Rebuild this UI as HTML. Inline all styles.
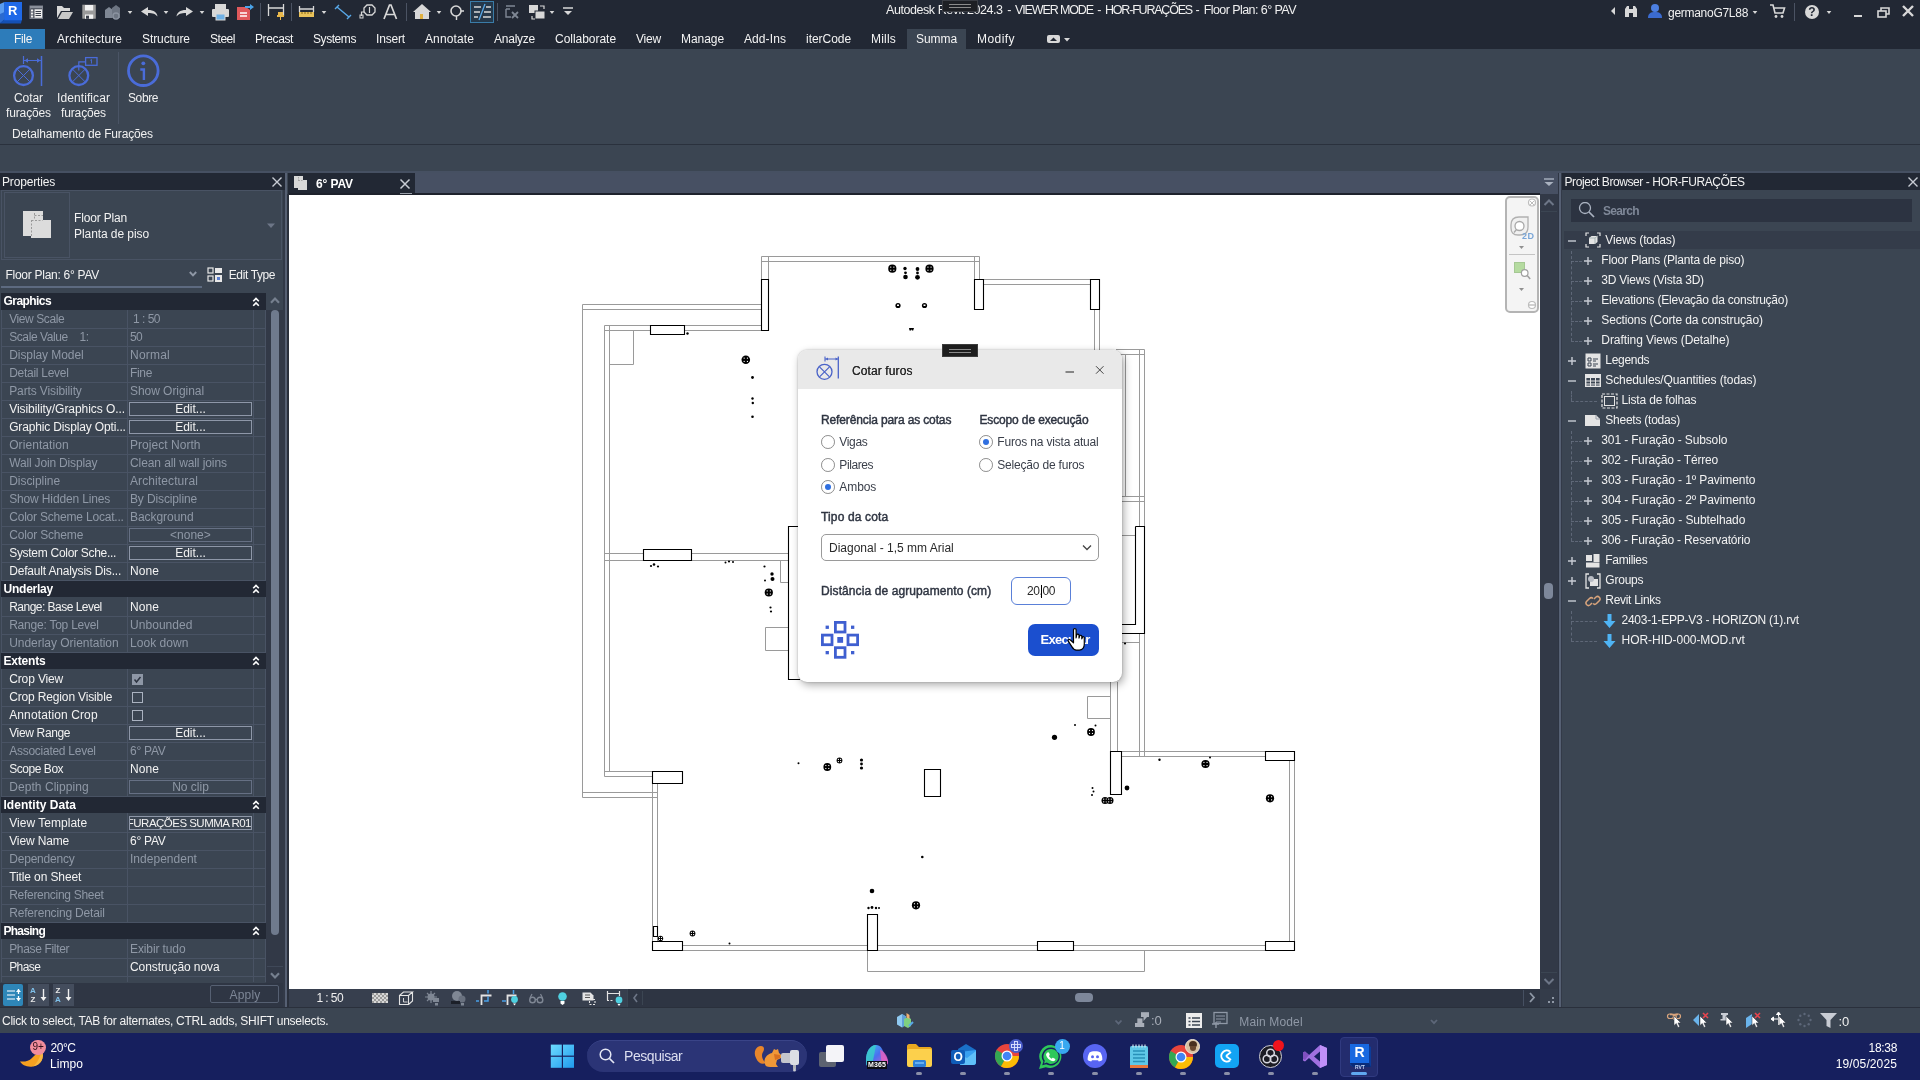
<!DOCTYPE html>
<html lang="pt-BR"><head><meta charset="utf-8"><title>Autodesk Revit - Cotar furos</title><style>
html,body{margin:0;padding:0;}
body{width:1920px;height:1080px;position:relative;overflow:hidden;background:#3b4552;font-family:"Liberation Sans",sans-serif;}
body div,body span,body svg{position:absolute;}
#root{left:0;top:0;width:1920px;height:1080px;will-change:transform;}
span{display:block;}
</style></head><body><div id="root">
<div style="left:0px;top:0px;width:1920px;height:49px;background:#222834;"></div>
<svg style="left:0px;top:0px;" width="24" height="24" viewBox="0 0 24 24"><path d="M0 4l4.500-2v17l-4.500 4z" fill="#5a9cf0"/><path d="M0 14l4.500-2v7l-4.500 4z" fill="#2a6ad0"/><path d="M0 23l4.500-4h17.500l-1 4.500h-21z" fill="#1450b4"/><rect x="4.200" y="2" width="17.800" height="18.300" fill="#1f69e8"/></svg>
<span style="left:8.1px;top:4.3px;height:14px;line-height:14px;font-size:13px;color:#fff;white-space:pre;font-weight:bold;">R</span>
<svg style="left:0px;top:0px;" width="600" height="24" viewBox="0 0 600 24"><rect x="30" y="6" width="12.500" height="12.500" fill="#4a4f5a" stroke="#7a7f8a" stroke-width="1"/><rect x="30" y="6" width="12.500" height="2.200" fill="#8a8f9a"/><rect x="34.500" y="9.300" width="7.500" height="8.500" fill="#f0f0f0"/><path d="M35.500 11.500h5.500M35.500 13.500h5.500M35.500 15.500h5.500" stroke="#3a3f4a" stroke-width="1"/><rect x="31" y="9.500" width="2.200" height="2" fill="#f0f0f0"/><rect x="31" y="12.500" width="2.200" height="2" fill="#f0f0f0"/><rect x="31" y="15.500" width="2.200" height="2" fill="#f0f0f0"/><path d="M57 6h5l2 2h6v3h-9l-4 7z" fill="#d8d8d8"/><path d="M62 12h11l-4 7h-11z" fill="#c8c8c8"/><rect x="82.300" y="4.700" width="13.500" height="14" fill="#9a9a9a"/><rect x="85" y="5" width="8.200" height="5.500" fill="#f2f2f2"/><rect x="85" y="14.500" width="8.200" height="4.300" fill="#f2f2f2"/><rect x="86" y="15.700" width="3" height="3.100" fill="#3a3f4a"/><path d="M105 10l4-3 4 3v8h-8z" fill="#7f8794"/><path d="M112 8l4-3 4 3v10h-8z" fill="#6d7582"/><circle cx="116" cy="16" r="3" fill="none" stroke="#8b93a0" stroke-width="1.3"/><path d="M127.7 11h4.600l-2.300 3z" fill="#d8d8d8"/><path d="M141 11.500l7-4.500v3c6 0 9 2.500 9.500 6.500c-2-2.500-4.500-3.500-9.500-3.500v3z" fill="#d8d8d8"/><path d="M163.7 11h4.600l-2.300 3z" fill="#d8d8d8"/><path d="M193 11.500l-7-4.500v3c-6 0-9 2.500-9.500 6.500c2-2.500 4.500-3.500 9.500-3.500v3z" fill="#d8d8d8"/><path d="M199.7 11h4.600l-2.300 3z" fill="#d8d8d8"/><rect x="215" y="4" width="11" height="5" fill="#d8d8d8"/><rect x="212" y="9" width="17" height="8" rx="1" fill="#d8d8d8"/><rect x="216" y="14" width="9" height="6" fill="#6fb1e6" stroke="#d8d8d8" stroke-width="1"/><path d="M237 7h9l4 3v10h-13z" fill="#e0595c"/><path d="M240 13h7M240 16h7" stroke="#fff" stroke-width="1.5"/><path d="M245 6h5v-2l4 3-4 3v-2h-5z" fill="#4aa3e8"/><path d="M260.500 3v18M291.500 3v18M406.500 3v18M497.500 3v18" stroke="#4b5363" stroke-width="1"/><path d="M268.500 4v12M283.500 4v12M269 8h14" stroke="#d8d8d8" stroke-width="1.3" fill="none"/><path d="M278 12h5v3h1v2h-7v-2h1z" fill="#e8b84c"/><path d="M280.500 17v3" stroke="#e8b84c" stroke-width="1"/><path d="M299.500 6v6M313.500 6v6M300 9h13" stroke="#d8d8d8" stroke-width="1.3"/><rect x="299" y="12" width="15" height="5" fill="#e9c25a"/><path d="M302 12v2M305 12v2M308 12v2M311 12v2" stroke="#8a6a14" stroke-width="1"/><path d="M321.7 11h4.600l-2.300 3z" fill="#d8d8d8"/><path d="M337 7l12 10M335 9l4-4M347 19l4-4" stroke="#58a8e8" stroke-width="1.4"/><path d="M364 8l3-3h5l3 3v4l-3 3h-5l-3-3z" fill="none" stroke="#d8d8d8" stroke-width="1.3"/><path d="M369.500 7v6" stroke="#d8d8d8" stroke-width="1.2"/><path d="M361.500 16v-4h3" fill="none" stroke="#d8d8d8" stroke-width="1.2"/><rect x="360" y="15" width="3" height="3" fill="none" stroke="#d8d8d8" stroke-width="1"/><path d="M384 19l5.500-14h1.500l5.500 14M386 14.500h8.500" fill="none" stroke="#d8d8d8" stroke-width="1.700"/><path d="M413 12l9-8 9 8h-2v7h-14v-7z" fill="#d8d8d8"/><rect x="420" y="14" width="3" height="5" fill="#e0b040"/><path d="M436.7 11h4.600l-2.300 3z" fill="#d8d8d8"/><circle cx="456" cy="11" r="5" fill="none" stroke="#d8d8d8" stroke-width="1.6"/><path d="M461 11l3 0M456.500 16v4" stroke="#d8d8d8" stroke-width="1.4"/><rect x="470.500" y="1.500" width="23" height="21" fill="#25384a" stroke="#3a7ca8" stroke-width="1"/><path d="M474 7h7M486 7h5M474 12h6M484 12h7M474 17h4M483 17h8" stroke="#d8d8d8" stroke-width="1.6"/><path d="M485 4l-6 16" stroke="#58a8e8" stroke-width="1.3"/><path d="M506 6h9M506 9h4M506 9v8h5" stroke="#7f8794" stroke-width="1.4" fill="none"/><path d="M512 12l6 6M518 12l-6 6" stroke="#7f8794" stroke-width="1.8"/><rect x="529" y="5" width="9" height="8" fill="#d8d8d8"/><rect x="535" y="11" width="10" height="8" fill="#d8d8d8" stroke="#222834" stroke-width="1"/><path d="M540 6h4v3M532 16v3h3" stroke="#d8d8d8" stroke-width="1.2" fill="none"/><path d="M549.7 11h4.600l-2.300 3z" fill="#d8d8d8"/><path d="M563 8h10" stroke="#d8d8d8" stroke-width="1.5"/><path d="M564 11h8l-4 4z" fill="#d8d8d8"/></svg>
<span style="left:886.0px;top:2.0px;height:16px;line-height:16px;font-size:12.5px;color:#f0f0f0;white-space:pre;letter-spacing:-0.44px;">Autodesk Revit 2024.3</span>
<span style="left:1007.3px;top:2.0px;height:16px;line-height:16px;font-size:12.5px;color:#f0f0f0;white-space:pre;">-</span>
<span style="left:1015.0px;top:2.0px;height:16px;line-height:16px;font-size:12.5px;color:#f0f0f0;white-space:pre;letter-spacing:-1.12px;">VIEWER MODE</span>
<span style="left:1097.3px;top:2.0px;height:16px;line-height:16px;font-size:12.5px;color:#f0f0f0;white-space:pre;">-</span>
<span style="left:1105.0px;top:2.0px;height:16px;line-height:16px;font-size:12.5px;color:#f0f0f0;white-space:pre;letter-spacing:-1.20px;">HOR-FURAÇÕES</span>
<span style="left:1195.5px;top:2.0px;height:16px;line-height:16px;font-size:12.5px;color:#f0f0f0;white-space:pre;">-</span>
<span style="left:1203.7px;top:2.0px;height:16px;line-height:16px;font-size:12.5px;color:#f0f0f0;white-space:pre;letter-spacing:-0.57px;">Floor Plan: 6° PAV</span>
<div style="left:942px;top:0px;width:36px;height:12px;background:#1d1f24;border:1px solid #3a3d44;box-sizing:border-box;"></div>
<div style="left:949px;top:4px;width:22px;height:1px;background:#8a8a8a;"></div>
<div style="left:949px;top:7px;width:22px;height:1px;background:#8a8a8a;"></div>
<svg style="left:1600px;top:0px;" width="320" height="24" viewBox="0 0 320 24"><path d="M15 7v8l-4-4z" fill="#d8d8d8"/><path d="M25 9l2-3h2v11h-4zM33 6h2l2 3v8h-4z" fill="#d8d8d8"/><rect x="29" y="9" width="4" height="4" fill="#d8d8d8"/><circle cx="55" cy="8" r="4" fill="#4c7fe0"/><path d="M48 18c0-5 3-6 7-6s7 1 7 6z" fill="#3b6bd0"/><path d="M152.7 11h4.600l-2.300 3z" fill="#d8d8d8"/><path d="M170 5h3l2 8h8l1.500-5h-10" fill="none" stroke="#d8d8d8" stroke-width="1.6"/><circle cx="176" cy="16.500" r="1.400" fill="#d8d8d8"/><circle cx="182" cy="16.500" r="1.400" fill="#d8d8d8"/><path d="M194.500 3v18" stroke="#4b5363" stroke-width="1"/><circle cx="212" cy="12" r="7" fill="#d8d8d8"/><path d="M226.7 11h4.600l-2.300 3z" fill="#d8d8d8"/><path d="M254 16h8" stroke="#d8d8d8" stroke-width="2"/><rect x="278" y="11" width="8" height="6" fill="none" stroke="#d8d8d8" stroke-width="1.6"/><path d="M281 11v-3h8v6h-3" fill="none" stroke="#d8d8d8" stroke-width="1.6"/><path d="M303 6l10 10M313 6l-10 10" stroke="#d8d8d8" stroke-width="2.4"/></svg>
<span style="left:1808.3px;top:5.0px;height:14px;line-height:14px;font-size:12px;color:#222834;white-space:pre;font-weight:bold;">?</span>
<span style="left:1668.0px;top:5.0px;height:16px;line-height:16px;font-size:12px;color:#f0f0f0;white-space:pre;letter-spacing:-0.28px;">germanoG7L88</span>
<div style="left:0px;top:29px;width:45px;height:20px;background:#2d7cba;"></div>
<div style="left:907px;top:29px;width:59px;height:20px;background:#3b4552;"></div>
<span style="left:14.0px;top:31.0px;height:16px;line-height:16px;font-size:12px;color:#f4f4f4;white-space:pre;letter-spacing:-0.33px;">File</span>
<span style="left:57.0px;top:31.0px;height:16px;line-height:16px;font-size:12px;color:#f4f4f4;white-space:pre;letter-spacing:0.08px;">Architecture</span>
<span style="left:142.0px;top:31.0px;height:16px;line-height:16px;font-size:12px;color:#f4f4f4;white-space:pre;letter-spacing:-0.08px;">Structure</span>
<span style="left:210.0px;top:31.0px;height:16px;line-height:16px;font-size:12px;color:#f4f4f4;white-space:pre;letter-spacing:-0.47px;">Steel</span>
<span style="left:255.0px;top:31.0px;height:16px;line-height:16px;font-size:12px;color:#f4f4f4;white-space:pre;letter-spacing:-0.38px;">Precast</span>
<span style="left:313.0px;top:31.0px;height:16px;line-height:16px;font-size:12px;color:#f4f4f4;white-space:pre;letter-spacing:-0.43px;">Systems</span>
<span style="left:376.0px;top:31.0px;height:16px;line-height:16px;font-size:12px;color:#f4f4f4;white-space:pre;letter-spacing:-0.17px;">Insert</span>
<span style="left:425.0px;top:31.0px;height:16px;line-height:16px;font-size:12px;color:#f4f4f4;white-space:pre;letter-spacing:0.12px;">Annotate</span>
<span style="left:494.0px;top:31.0px;height:16px;line-height:16px;font-size:12px;color:#f4f4f4;white-space:pre;letter-spacing:-0.24px;">Analyze</span>
<span style="left:555.0px;top:31.0px;height:16px;line-height:16px;font-size:12px;color:#f4f4f4;white-space:pre;letter-spacing:-0.03px;">Collaborate</span>
<span style="left:636.0px;top:31.0px;height:16px;line-height:16px;font-size:12px;color:#f4f4f4;white-space:pre;letter-spacing:-0.20px;">View</span>
<span style="left:681.0px;top:31.0px;height:16px;line-height:16px;font-size:12px;color:#f4f4f4;white-space:pre;letter-spacing:-0.06px;">Manage</span>
<span style="left:744.0px;top:31.0px;height:16px;line-height:16px;font-size:12px;color:#f4f4f4;white-space:pre;letter-spacing:0.09px;">Add-Ins</span>
<span style="left:806.0px;top:31.0px;height:16px;line-height:16px;font-size:12px;color:#f4f4f4;white-space:pre;letter-spacing:-0.04px;">iterCode</span>
<span style="left:871.0px;top:31.0px;height:16px;line-height:16px;font-size:12px;color:#f4f4f4;white-space:pre;letter-spacing:0.20px;">Mills</span>
<span style="left:916.0px;top:31.0px;height:16px;line-height:16px;font-size:12px;color:#f4f4f4;white-space:pre;letter-spacing:-0.07px;">Summa</span>
<span style="left:977.0px;top:31.0px;height:16px;line-height:16px;font-size:12px;color:#f4f4f4;white-space:pre;letter-spacing:0.44px;">Modify</span>
<svg style="left:1044px;top:32px;" width="30" height="14" viewBox="0 0 30 14"><rect x="3" y="3" width="13" height="8" rx="2" fill="#d8d8d8"/><path d="M6 9l3.500-3.500 3.500 3.500z" fill="#222834"/><path d="M20 6h6l-3 3.500z" fill="#d8d8d8"/></svg>
<div style="left:0px;top:49px;width:1920px;height:123px;background:#3b4552;"></div>
<div style="left:0px;top:144px;width:1920px;height:1px;background:#2a313d;"></div>
<div style="left:118px;top:52px;width:1px;height:72px;background:#4a5465;"></div>
<svg style="left:0px;top:49px;" width="200" height="100" viewBox="0 49 200 100"><circle cx="23.500" cy="75.600" r="9.400" fill="none" stroke="#4a6cd9" stroke-width="2.300"/><path d="M17 69l13 13M30 69l-13 13" stroke="#4a6cd9" stroke-width="1"/><path d="M41.500 56v30" stroke="#4a6cd9" stroke-width="1.500"/><path d="M23.500 56v8M24 60.500h17" stroke="#4a6cd9" stroke-width="1.200"/><path d="M24.500 60.500l3.500-2.200v4.400zM40.500 60.500l-3.500-2.200v4.400z" fill="#4a6cd9"/><circle cx="78.800" cy="75.600" r="9.400" fill="none" stroke="#4a6cd9" stroke-width="2.300"/><path d="M72.300 69l13 13M85.300 69l-13 13" stroke="#4a6cd9" stroke-width="1"/><rect x="85.600" y="57.600" width="11.400" height="7.700" fill="none" stroke="#4a6cd9" stroke-width="1.300"/><path d="M78.800 70.500v-8.700h6.500" stroke="#4a6cd9" stroke-width="1.200" fill="none"/><path d="M90.300 60.300l1.200-.8v4" stroke="#4a6cd9" stroke-width=".9" fill="none"/><circle cx="143.300" cy="70.700" r="14.800" fill="none" stroke="#4a6cd9" stroke-width="2.800"/><circle cx="143.300" cy="63.300" r="1.900" fill="#4a6cd9"/><path d="M140.300 69.500h3.600v10.500" stroke="#4a6cd9" stroke-width="2.400" fill="none"/></svg>
<span style="left:14.0px;top:90.0px;height:16px;line-height:16px;font-size:12px;color:#f0f0f0;white-space:pre;letter-spacing:-0.07px;">Cotar</span>
<span style="left:6.0px;top:105.0px;height:16px;line-height:16px;font-size:12px;color:#f0f0f0;white-space:pre;letter-spacing:-0.13px;">furações</span>
<span style="left:57.0px;top:90.0px;height:16px;line-height:16px;font-size:12px;color:#f0f0f0;white-space:pre;letter-spacing:0.09px;">Identificar</span>
<span style="left:61.0px;top:105.0px;height:16px;line-height:16px;font-size:12px;color:#f0f0f0;white-space:pre;letter-spacing:-0.13px;">furações</span>
<span style="left:128.0px;top:90.0px;height:16px;line-height:16px;font-size:12px;color:#f0f0f0;white-space:pre;letter-spacing:-0.40px;">Sobre</span>
<span style="left:12.0px;top:126.0px;height:16px;line-height:16px;font-size:12px;color:#f0f0f0;white-space:pre;letter-spacing:-0.16px;">Detalhamento de Furações</span>
<div style="left:0px;top:171px;width:1920px;height:2px;background:#465062;"></div>
<div style="left:0px;top:173px;width:285px;height:17px;background:#222834;"></div>
<span style="left:2.0px;top:173.5px;height:16px;line-height:16px;font-size:12px;color:#f2f2f2;white-space:pre;letter-spacing:-0.17px;">Properties</span>
<svg style="left:271px;top:176px;" width="12" height="12" viewBox="0 0 12 12"><path d="M1.500 1.500l9 9M10.500 1.500l-9 9" stroke="#c8ccd4" stroke-width="1.400"/></svg>
<div style="left:1px;top:190px;width:281px;height:70px;border:1px solid #495364;box-sizing:border-box;"></div>
<div style="left:4px;top:192px;width:66px;height:66px;border:1px solid #495364;box-sizing:border-box;"></div>
<svg style="left:22px;top:210px;" width="30" height="30" viewBox="0 0 30 30"><rect x="1" y="1" width="20" height="25" fill="#dcdcdc"/><rect x="9" y="10" width="20" height="18" fill="#dcdcdc"/><path d="M12.500 3v7M12.500 5.500h8.500" stroke="#9a9a9a" stroke-width="1" stroke-dasharray="2 1.500" fill="none"/><path d="M9.500 10v17M9.500 10.500h11" stroke="#9a9a9a" stroke-width="1" stroke-dasharray="2 1.500" fill="none"/></svg>
<span style="left:74.0px;top:210.0px;height:16px;line-height:16px;font-size:12px;color:#f2f2f2;white-space:pre;letter-spacing:-0.17px;">Floor Plan</span>
<span style="left:74.0px;top:226.0px;height:16px;line-height:16px;font-size:12px;color:#f2f2f2;white-space:pre;letter-spacing:-0.07px;">Planta de piso</span>
<svg style="left:266px;top:222px;" width="10" height="8" viewBox="0 0 10 8"><path d="M1 1.500h8l-4 4.500z" fill="#6d7687"/></svg>
<span style="left:5.5px;top:266.5px;height:16px;line-height:16px;font-size:12px;color:#f2f2f2;white-space:pre;letter-spacing:-0.27px;">Floor Plan: 6° PAV</span>
<svg style="left:188px;top:270px;" width="10" height="8" viewBox="0 0 10 8"><path d="M1.800 2l3.200 3.300 3.200-3.300" fill="none" stroke="#8f98a6" stroke-width="1.900"/></svg>
<div style="left:1px;top:286px;width:201px;height:2px;background:#5d6a80;"></div>
<svg style="left:207px;top:267px;" width="16" height="16" viewBox="0 0 16 16"><rect x="1" y="1" width="5" height="5" fill="none" stroke="#e8e8e8" stroke-width="1.200"/><rect x="1" y="9" width="5" height="5" fill="none" stroke="#e8e8e8" stroke-width="1.200"/><rect x="8" y="1" width="7" height="5" fill="#e8e8e8"/><rect x="8" y="8" width="7" height="7" fill="#e8e8e8"/><rect x="10" y="10" width="3" height="3" fill="#5b7fd0"/></svg>
<span style="left:228.7px;top:266.5px;height:16px;line-height:16px;font-size:12px;color:#f2f2f2;white-space:pre;letter-spacing:-0.37px;">Edit Type</span>
<div style="left:1px;top:293px;width:265px;height:684px;background:#3b4552;"></div>
<div style="left:127px;top:309.5px;width:1px;height:672.5px;background:#495364;"></div>
<div style="left:253px;top:309.5px;width:1px;height:672.5px;background:#495364;"></div>
<div style="left:1px;top:309.5px;width:1px;height:672.5px;background:#495364;"></div>
<div style="left:265px;top:309.5px;width:1px;height:672.5px;background:#495364;"></div>
<div style="left:1px;top:293px;width:265px;height:16.5px;background:#222834;"></div>
<span style="left:3.5px;top:293.0px;height:16px;line-height:16px;font-size:12px;color:#fff;white-space:pre;font-weight:bold;letter-spacing:-0.56px;">Graphics</span>
<svg style="left:251px;top:295.5px;" width="10" height="12" viewBox="0 0 10 12"><path d="M2.200 5.300l2.800-2.800 2.800 2.800M2.200 9.800l2.800-2.800 2.800 2.800" fill="none" stroke="#fff" stroke-width="1.600"/></svg>
<div style="left:1px;top:328.0px;width:265px;height:1px;background:#495364;"></div>
<span style="left:9.2px;top:310.7px;height:16px;line-height:16px;font-size:12px;color:#8f98a6;white-space:pre;letter-spacing:-0.41px;">View Scale</span>
<span style="left:133.0px;top:310.7px;height:16px;line-height:16px;font-size:12px;color:#8f98a6;white-space:pre;letter-spacing:-0.50px;">1 : 50</span>
<div style="left:1px;top:346.0px;width:265px;height:1px;background:#495364;"></div>
<span style="left:9.2px;top:328.7px;height:16px;line-height:16px;font-size:12px;color:#8f98a6;white-space:pre;letter-spacing:-0.41px;">Scale Value    1:</span>
<span style="left:130.0px;top:328.7px;height:16px;line-height:16px;font-size:12px;color:#8f98a6;white-space:pre;letter-spacing:-0.67px;">50</span>
<div style="left:1px;top:364.0px;width:265px;height:1px;background:#495364;"></div>
<span style="left:9.2px;top:346.7px;height:16px;line-height:16px;font-size:12px;color:#8f98a6;white-space:pre;letter-spacing:-0.07px;">Display Model</span>
<span style="left:130.0px;top:346.7px;height:16px;line-height:16px;font-size:12px;color:#8f98a6;white-space:pre;letter-spacing:0.22px;">Normal</span>
<div style="left:1px;top:382.0px;width:265px;height:1px;background:#495364;"></div>
<span style="left:9.2px;top:364.7px;height:16px;line-height:16px;font-size:12px;color:#8f98a6;white-space:pre;letter-spacing:-0.27px;">Detail Level</span>
<span style="left:130.0px;top:364.7px;height:16px;line-height:16px;font-size:12px;color:#8f98a6;white-space:pre;letter-spacing:-0.34px;">Fine</span>
<div style="left:1px;top:400.0px;width:265px;height:1px;background:#495364;"></div>
<span style="left:9.2px;top:382.7px;height:16px;line-height:16px;font-size:12px;color:#8f98a6;white-space:pre;letter-spacing:-0.12px;">Parts Visibility</span>
<span style="left:130.0px;top:382.7px;height:16px;line-height:16px;font-size:12px;color:#8f98a6;white-space:pre;letter-spacing:-0.05px;">Show Original</span>
<div style="left:1px;top:418.0px;width:265px;height:1px;background:#495364;"></div>
<span style="left:9.2px;top:400.7px;height:16px;line-height:16px;font-size:12px;color:#f2f2f2;white-space:pre;letter-spacing:-0.05px;">Visibility/Graphics O...</span>
<div style="left:129px;top:401.5px;width:123px;height:14.5px;border:1px solid #8e97a8;box-sizing:border-box;"></div>
<span style="left:175.2px;top:401.2px;height:16px;line-height:16px;font-size:12px;color:#f2f2f2;white-space:pre;">Edit...</span>
<div style="left:1px;top:436.0px;width:265px;height:1px;background:#495364;"></div>
<span style="left:9.2px;top:418.7px;height:16px;line-height:16px;font-size:12px;color:#f2f2f2;white-space:pre;letter-spacing:-0.15px;">Graphic Display Opti...</span>
<div style="left:129px;top:419.5px;width:123px;height:14.5px;border:1px solid #8e97a8;box-sizing:border-box;"></div>
<span style="left:175.2px;top:419.2px;height:16px;line-height:16px;font-size:12px;color:#f2f2f2;white-space:pre;">Edit...</span>
<div style="left:1px;top:454.0px;width:265px;height:1px;background:#495364;"></div>
<span style="left:9.2px;top:436.7px;height:16px;line-height:16px;font-size:12px;color:#8f98a6;white-space:pre;letter-spacing:0.07px;">Orientation</span>
<span style="left:130.0px;top:436.7px;height:16px;line-height:16px;font-size:12px;color:#8f98a6;white-space:pre;letter-spacing:0.04px;">Project North</span>
<div style="left:1px;top:472.0px;width:265px;height:1px;background:#495364;"></div>
<span style="left:9.2px;top:454.7px;height:16px;line-height:16px;font-size:12px;color:#8f98a6;white-space:pre;letter-spacing:-0.17px;">Wall Join Display</span>
<span style="left:130.0px;top:454.7px;height:16px;line-height:16px;font-size:12px;color:#8f98a6;white-space:pre;letter-spacing:-0.09px;">Clean all wall joins</span>
<div style="left:1px;top:490.0px;width:265px;height:1px;background:#495364;"></div>
<span style="left:9.2px;top:472.7px;height:16px;line-height:16px;font-size:12px;color:#8f98a6;white-space:pre;letter-spacing:-0.04px;">Discipline</span>
<span style="left:130.0px;top:472.7px;height:16px;line-height:16px;font-size:12px;color:#8f98a6;white-space:pre;letter-spacing:0.10px;">Architectural</span>
<div style="left:1px;top:508.0px;width:265px;height:1px;background:#495364;"></div>
<span style="left:9.2px;top:490.7px;height:16px;line-height:16px;font-size:12px;color:#8f98a6;white-space:pre;letter-spacing:-0.14px;">Show Hidden Lines</span>
<span style="left:130.0px;top:490.7px;height:16px;line-height:16px;font-size:12px;color:#8f98a6;white-space:pre;letter-spacing:-0.13px;">By Discipline</span>
<div style="left:1px;top:526.0px;width:265px;height:1px;background:#495364;"></div>
<span style="left:9.2px;top:508.7px;height:16px;line-height:16px;font-size:12px;color:#8f98a6;white-space:pre;letter-spacing:-0.20px;">Color Scheme Locat...</span>
<span style="left:130.0px;top:508.7px;height:16px;line-height:16px;font-size:12px;color:#8f98a6;white-space:pre;letter-spacing:-0.05px;">Background</span>
<div style="left:1px;top:544.0px;width:265px;height:1px;background:#495364;"></div>
<span style="left:9.2px;top:526.7px;height:16px;line-height:16px;font-size:12px;color:#8f98a6;white-space:pre;letter-spacing:-0.17px;">Color Scheme</span>
<div style="left:129px;top:527.5px;width:123px;height:14.5px;border:1px solid #667084;box-sizing:border-box;"></div>
<span style="left:170.1px;top:527.2px;height:16px;line-height:16px;font-size:12px;color:#8f98a6;white-space:pre;">&lt;none&gt;</span>
<div style="left:1px;top:562.0px;width:265px;height:1px;background:#495364;"></div>
<span style="left:9.2px;top:544.7px;height:16px;line-height:16px;font-size:12px;color:#f2f2f2;white-space:pre;letter-spacing:-0.29px;">System Color Sche...</span>
<div style="left:129px;top:545.5px;width:123px;height:14.5px;border:1px solid #8e97a8;box-sizing:border-box;"></div>
<span style="left:175.2px;top:545.2px;height:16px;line-height:16px;font-size:12px;color:#f2f2f2;white-space:pre;">Edit...</span>
<div style="left:1px;top:580.0px;width:265px;height:1px;background:#495364;"></div>
<span style="left:9.2px;top:562.7px;height:16px;line-height:16px;font-size:12px;color:#f2f2f2;white-space:pre;letter-spacing:-0.18px;">Default Analysis Dis...</span>
<span style="left:130.0px;top:562.7px;height:16px;line-height:16px;font-size:12px;color:#f2f2f2;white-space:pre;letter-spacing:0.08px;">None</span>
<div style="left:1px;top:580.7px;width:265px;height:16.5px;background:#222834;"></div>
<span style="left:3.5px;top:580.7px;height:16px;line-height:16px;font-size:12px;color:#fff;white-space:pre;font-weight:bold;letter-spacing:-0.23px;">Underlay</span>
<svg style="left:251px;top:583.2px;" width="10" height="12" viewBox="0 0 10 12"><path d="M2.200 5.300l2.800-2.800 2.800 2.800M2.200 9.800l2.800-2.800 2.800 2.800" fill="none" stroke="#fff" stroke-width="1.600"/></svg>
<div style="left:1px;top:616.0px;width:265px;height:1px;background:#495364;"></div>
<span style="left:9.2px;top:598.7px;height:16px;line-height:16px;font-size:12px;color:#f2f2f2;white-space:pre;letter-spacing:-0.52px;">Range: Base Level</span>
<span style="left:130.0px;top:598.7px;height:16px;line-height:16px;font-size:12px;color:#f2f2f2;white-space:pre;letter-spacing:0.08px;">None</span>
<div style="left:1px;top:634.0px;width:265px;height:1px;background:#495364;"></div>
<span style="left:9.2px;top:616.7px;height:16px;line-height:16px;font-size:12px;color:#8f98a6;white-space:pre;letter-spacing:-0.23px;">Range: Top Level</span>
<span style="left:130.0px;top:616.7px;height:16px;line-height:16px;font-size:12px;color:#8f98a6;white-space:pre;letter-spacing:0.05px;">Unbounded</span>
<div style="left:1px;top:652.0px;width:265px;height:1px;background:#495364;"></div>
<span style="left:9.2px;top:634.7px;height:16px;line-height:16px;font-size:12px;color:#8f98a6;white-space:pre;letter-spacing:-0.03px;">Underlay Orientation</span>
<span style="left:130.0px;top:634.7px;height:16px;line-height:16px;font-size:12px;color:#8f98a6;white-space:pre;letter-spacing:0.05px;">Look down</span>
<div style="left:1px;top:652.7px;width:265px;height:16.5px;background:#222834;"></div>
<span style="left:3.5px;top:652.7px;height:16px;line-height:16px;font-size:12px;color:#fff;white-space:pre;font-weight:bold;letter-spacing:-0.19px;">Extents</span>
<svg style="left:251px;top:655.2px;" width="10" height="12" viewBox="0 0 10 12"><path d="M2.200 5.300l2.800-2.800 2.800 2.800M2.200 9.800l2.800-2.800 2.800 2.800" fill="none" stroke="#fff" stroke-width="1.600"/></svg>
<div style="left:1px;top:688.0px;width:265px;height:1px;background:#495364;"></div>
<span style="left:9.2px;top:670.7px;height:16px;line-height:16px;font-size:12px;color:#f2f2f2;white-space:pre;letter-spacing:-0.13px;">Crop View</span>
<div style="left:132px;top:674.2px;width:11px;height:11px;background:#8e97a6;"></div>
<svg style="left:132px;top:674.2px;" width="11" height="11" viewBox="0 0 11 11"><path d="M2.500 5.500l2 2.500 4-5" fill="none" stroke="#2c3340" stroke-width="1.500"/></svg>
<div style="left:1px;top:706.0px;width:265px;height:1px;background:#495364;"></div>
<span style="left:9.2px;top:688.7px;height:16px;line-height:16px;font-size:12px;color:#f2f2f2;white-space:pre;letter-spacing:-0.15px;">Crop Region Visible</span>
<div style="left:132px;top:692.2px;width:11px;height:11px;border:1px solid #aab2c0;box-sizing:border-box;"></div>
<div style="left:1px;top:724.0px;width:265px;height:1px;background:#495364;"></div>
<span style="left:9.2px;top:706.7px;height:16px;line-height:16px;font-size:12px;color:#f2f2f2;white-space:pre;letter-spacing:0.12px;">Annotation Crop</span>
<div style="left:132px;top:710.2px;width:11px;height:11px;border:1px solid #aab2c0;box-sizing:border-box;"></div>
<div style="left:1px;top:742.0px;width:265px;height:1px;background:#495364;"></div>
<span style="left:9.2px;top:724.7px;height:16px;line-height:16px;font-size:12px;color:#f2f2f2;white-space:pre;letter-spacing:-0.35px;">View Range</span>
<div style="left:129px;top:725.5px;width:123px;height:14.5px;border:1px solid #8e97a8;box-sizing:border-box;"></div>
<span style="left:175.2px;top:725.2px;height:16px;line-height:16px;font-size:12px;color:#f2f2f2;white-space:pre;">Edit...</span>
<div style="left:1px;top:760.0px;width:265px;height:1px;background:#495364;"></div>
<span style="left:9.2px;top:742.7px;height:16px;line-height:16px;font-size:12px;color:#8f98a6;white-space:pre;letter-spacing:-0.26px;">Associated Level</span>
<span style="left:130.0px;top:742.7px;height:16px;line-height:16px;font-size:12px;color:#8f98a6;white-space:pre;letter-spacing:-0.26px;">6° PAV</span>
<div style="left:1px;top:778.0px;width:265px;height:1px;background:#495364;"></div>
<span style="left:9.2px;top:760.7px;height:16px;line-height:16px;font-size:12px;color:#f2f2f2;white-space:pre;letter-spacing:-0.45px;">Scope Box</span>
<span style="left:130.0px;top:760.7px;height:16px;line-height:16px;font-size:12px;color:#f2f2f2;white-space:pre;letter-spacing:0.08px;">None</span>
<div style="left:1px;top:796.0px;width:265px;height:1px;background:#495364;"></div>
<span style="left:9.2px;top:778.7px;height:16px;line-height:16px;font-size:12px;color:#8f98a6;white-space:pre;letter-spacing:0.06px;">Depth Clipping</span>
<div style="left:129px;top:779.5px;width:123px;height:14.5px;border:1px solid #667084;box-sizing:border-box;"></div>
<span style="left:172.2px;top:779.2px;height:16px;line-height:16px;font-size:12px;color:#8f98a6;white-space:pre;">No clip</span>
<div style="left:1px;top:796.7px;width:265px;height:16.5px;background:#222834;"></div>
<span style="left:3.5px;top:796.7px;height:16px;line-height:16px;font-size:12px;color:#fff;white-space:pre;font-weight:bold;letter-spacing:0.04px;">Identity Data</span>
<svg style="left:251px;top:799.2px;" width="10" height="12" viewBox="0 0 10 12"><path d="M2.200 5.300l2.800-2.800 2.800 2.800M2.200 9.800l2.800-2.800 2.800 2.800" fill="none" stroke="#fff" stroke-width="1.600"/></svg>
<div style="left:1px;top:832.0px;width:265px;height:1px;background:#495364;"></div>
<span style="left:9.2px;top:814.7px;height:16px;line-height:16px;font-size:12px;color:#f2f2f2;white-space:pre;letter-spacing:0.03px;">View Template</span>
<div style="left:129px;top:815.5px;width:123px;height:14.5px;border:1px solid #8e97a8;box-sizing:border-box;overflow:hidden;"><span style="right:0px;top:-0.500px;height:14px;line-height:14px;font-size:11.500px;color:#f2f2f2;white-space:nowrap;letter-spacing:-0.520px;">HOR-FURAÇÕES SUMMA R01</span></div>
<div style="left:1px;top:850.0px;width:265px;height:1px;background:#495364;"></div>
<span style="left:9.2px;top:832.7px;height:16px;line-height:16px;font-size:12px;color:#f2f2f2;white-space:pre;letter-spacing:-0.13px;">View Name</span>
<span style="left:130.0px;top:832.7px;height:16px;line-height:16px;font-size:12px;color:#f2f2f2;white-space:pre;letter-spacing:-0.26px;">6° PAV</span>
<div style="left:1px;top:868.0px;width:265px;height:1px;background:#495364;"></div>
<span style="left:9.2px;top:850.7px;height:16px;line-height:16px;font-size:12px;color:#8f98a6;white-space:pre;letter-spacing:-0.19px;">Dependency</span>
<span style="left:130.0px;top:850.7px;height:16px;line-height:16px;font-size:12px;color:#8f98a6;white-space:pre;letter-spacing:0.02px;">Independent</span>
<div style="left:1px;top:886.0px;width:265px;height:1px;background:#495364;"></div>
<span style="left:9.2px;top:868.7px;height:16px;line-height:16px;font-size:12px;color:#f2f2f2;white-space:pre;letter-spacing:-0.11px;">Title on Sheet</span>
<div style="left:1px;top:904.0px;width:265px;height:1px;background:#495364;"></div>
<span style="left:9.2px;top:886.7px;height:16px;line-height:16px;font-size:12px;color:#8f98a6;white-space:pre;letter-spacing:-0.29px;">Referencing Sheet</span>
<div style="left:1px;top:922.0px;width:265px;height:1px;background:#495364;"></div>
<span style="left:9.2px;top:904.7px;height:16px;line-height:16px;font-size:12px;color:#8f98a6;white-space:pre;letter-spacing:-0.18px;">Referencing Detail</span>
<div style="left:1px;top:922.7px;width:265px;height:16.5px;background:#222834;"></div>
<span style="left:3.5px;top:922.7px;height:16px;line-height:16px;font-size:12px;color:#fff;white-space:pre;font-weight:bold;letter-spacing:-0.74px;">Phasing</span>
<svg style="left:251px;top:925.2px;" width="10" height="12" viewBox="0 0 10 12"><path d="M2.200 5.300l2.800-2.800 2.800 2.800M2.200 9.800l2.800-2.800 2.800 2.800" fill="none" stroke="#fff" stroke-width="1.600"/></svg>
<div style="left:1px;top:958.0px;width:265px;height:1px;background:#495364;"></div>
<span style="left:9.2px;top:940.7px;height:16px;line-height:16px;font-size:12px;color:#8f98a6;white-space:pre;letter-spacing:-0.34px;">Phase Filter</span>
<span style="left:130.0px;top:940.7px;height:16px;line-height:16px;font-size:12px;color:#8f98a6;white-space:pre;letter-spacing:-0.11px;">Exibir tudo</span>
<div style="left:1px;top:976.0px;width:265px;height:1px;background:#495364;"></div>
<span style="left:9.2px;top:958.7px;height:16px;line-height:16px;font-size:12px;color:#f2f2f2;white-space:pre;letter-spacing:-0.60px;">Phase</span>
<span style="left:130.0px;top:958.7px;height:16px;line-height:16px;font-size:12px;color:#f2f2f2;white-space:pre;letter-spacing:-0.08px;">Construção nova</span>
<div style="left:266px;top:293px;width:18px;height:690px;background:#323947;"></div>
<div style="left:266px;top:293px;width:17px;height:16.5px;background:#3b4552;"></div>
<svg style="left:269px;top:296px;" width="12" height="9" viewBox="0 0 12 9"><path d="M2 6.800l4-4.200 4 4.200" fill="none" stroke="#76808f" stroke-width="2.200"/></svg>
<div style="left:271px;top:310px;width:8px;height:625px;background:#6f7a8d;border-radius:4px;"></div>
<svg style="left:269px;top:971px;" width="12" height="9" viewBox="0 0 12 9"><path d="M2 2.200l4 4.200 4-4.200" fill="none" stroke="#76808f" stroke-width="2.200"/></svg>
<div style="left:267px;top:966px;width:16px;height:1px;background:#3f4858;"></div>
<div style="left:0px;top:983px;width:284px;height:25px;background:#2f3644;"></div>
<div style="left:3px;top:984px;width:20px;height:22px;background:#2e86b8;border-radius:2px;"></div>
<div style="left:28px;top:984px;width:21px;height:22px;background:#444d5d;"></div>
<div style="left:53px;top:984px;width:21px;height:22px;background:#444d5d;"></div>
<svg style="left:3px;top:984px;" width="72" height="22" viewBox="0 0 72 22"><path d="M4 7h8M4 11h8M4 15h8" stroke="#bcd8ea" stroke-width="1.300"/><path d="M15.500 5v5M15.500 12v5" stroke="#fff" stroke-width="1.300"/><path d="M13 8l2.500-3 2.500 3zM13 14l2.500 3 2.500-3z" fill="#fff"/><path d="M40.500 5v11" stroke="#f0f0f0" stroke-width="1.400"/><path d="M37.500 13l3 4 3-4z" fill="#f0f0f0"/><path d="M65.500 5v11" stroke="#f0f0f0" stroke-width="1.400"/><path d="M62.500 13l3 4 3-4z" fill="#f0f0f0"/></svg>
<span style="left:30.0px;top:985.5px;height:9px;line-height:9px;font-size:8px;color:#7fc0ea;white-space:pre;font-weight:bold;">A</span>
<span style="left:30.5px;top:994.5px;height:9px;line-height:9px;font-size:8px;color:#e8e8e8;white-space:pre;font-weight:bold;">Z</span>
<span style="left:55.5px;top:985.5px;height:9px;line-height:9px;font-size:8px;color:#e8e8e8;white-space:pre;font-weight:bold;">Z</span>
<span style="left:55.0px;top:994.5px;height:9px;line-height:9px;font-size:8px;color:#7fc0ea;white-space:pre;font-weight:bold;">A</span>
<div style="left:210px;top:985px;width:69px;height:18px;border:1px solid #566072;box-sizing:border-box;border-radius:2px;"></div>
<span style="left:229.5px;top:986.5px;height:16px;line-height:16px;font-size:12px;color:#7d8696;white-space:pre;letter-spacing:0.20px;">Apply</span>
<div style="left:1540px;top:194px;width:18px;height:795px;background:#323947;"></div>
<div style="left:1558px;top:173px;width:1px;height:834px;background:#2e3543;"></div>
<div style="left:1559px;top:173px;width:2px;height:834px;background:#566073;"></div>
<div style="left:1561px;top:173px;width:1.5px;height:834px;background:#333a48;"></div>
<svg style="left:1542px;top:198px;" width="14" height="9" viewBox="0 0 14 9"><path d="M2.500 7l4.500-4.500 4.500 4.500" fill="none" stroke="#6d7687" stroke-width="2"/></svg>
<div style="left:1541px;top:211px;width:16px;height:1px;background:#3b4552;"></div>
<svg style="left:1542px;top:976.5px;" width="14" height="9" viewBox="0 0 14 9"><path d="M2.500 2l4.500 4.500 4.500-4.500" fill="none" stroke="#6d7687" stroke-width="2"/></svg>
<div style="left:1541px;top:972px;width:16px;height:1px;background:#3b4552;"></div>
<div style="left:1543.5px;top:583px;width:9px;height:16px;background:#7d879a;border-radius:4px;"></div>
<div style="left:1562px;top:173px;width:358px;height:837px;background:#3b4552;"></div>
<div style="left:1562px;top:173px;width:358px;height:17px;background:#222834;"></div>
<span style="left:1564.5px;top:173.5px;height:16px;line-height:16px;font-size:12px;color:#f2f2f2;white-space:pre;letter-spacing:-0.42px;">Project Browser - HOR-FURAÇÕES</span>
<svg style="left:1907px;top:176px;" width="12" height="12" viewBox="0 0 12 12"><path d="M1.500 1.500l9 9M10.500 1.500l-9 9" stroke="#c8ccd4" stroke-width="1.400"/></svg>
<div style="left:1571px;top:199px;width:341px;height:22.5px;background:#2c3341;"></div>
<svg style="left:1578px;top:202px;" width="18" height="18" viewBox="0 0 18 18"><circle cx="7" cy="6" r="5.500" fill="none" stroke="#aab2c0" stroke-width="1.300"/><path d="M11 10l5 5" stroke="#aab2c0" stroke-width="1.700"/></svg>
<span style="left:1603.0px;top:202.5px;height:16px;line-height:16px;font-size:12px;color:#7f8898;white-space:pre;font-weight:bold;letter-spacing:-0.67px;">Search</span>
<div style="left:1564px;top:231px;width:356px;height:17.5px;background:#343c4a;"></div>
<div style="left:1571px;top:251px;width:1px;height:90px;border-left:1px dashed #6d7687;box-sizing:border-box;opacity:.7;"></div>
<div style="left:1571px;top:261px;width:11px;height:1px;border-top:1px dashed #6d7687;box-sizing:border-box;opacity:.7;"></div>
<div style="left:1571px;top:281px;width:11px;height:1px;border-top:1px dashed #6d7687;box-sizing:border-box;opacity:.7;"></div>
<div style="left:1571px;top:301px;width:11px;height:1px;border-top:1px dashed #6d7687;box-sizing:border-box;opacity:.7;"></div>
<div style="left:1571px;top:321px;width:11px;height:1px;border-top:1px dashed #6d7687;box-sizing:border-box;opacity:.7;"></div>
<div style="left:1571px;top:341px;width:11px;height:1px;border-top:1px dashed #6d7687;box-sizing:border-box;opacity:.7;"></div>
<div style="left:1571px;top:391px;width:1px;height:10px;border-left:1px dashed #6d7687;box-sizing:border-box;opacity:.7;"></div>
<div style="left:1571px;top:401px;width:26px;height:1px;border-top:1px dashed #6d7687;box-sizing:border-box;opacity:.7;"></div>
<div style="left:1571px;top:431px;width:1px;height:110px;border-left:1px dashed #6d7687;box-sizing:border-box;opacity:.7;"></div>
<div style="left:1571px;top:441px;width:11px;height:1px;border-top:1px dashed #6d7687;box-sizing:border-box;opacity:.7;"></div>
<div style="left:1571px;top:461px;width:11px;height:1px;border-top:1px dashed #6d7687;box-sizing:border-box;opacity:.7;"></div>
<div style="left:1571px;top:481px;width:11px;height:1px;border-top:1px dashed #6d7687;box-sizing:border-box;opacity:.7;"></div>
<div style="left:1571px;top:501px;width:11px;height:1px;border-top:1px dashed #6d7687;box-sizing:border-box;opacity:.7;"></div>
<div style="left:1571px;top:521px;width:11px;height:1px;border-top:1px dashed #6d7687;box-sizing:border-box;opacity:.7;"></div>
<div style="left:1571px;top:541px;width:11px;height:1px;border-top:1px dashed #6d7687;box-sizing:border-box;opacity:.7;"></div>
<div style="left:1571px;top:611px;width:1px;height:30px;border-left:1px dashed #6d7687;box-sizing:border-box;opacity:.7;"></div>
<div style="left:1571px;top:621px;width:26px;height:1px;border-top:1px dashed #6d7687;box-sizing:border-box;opacity:.7;"></div>
<div style="left:1571px;top:641px;width:26px;height:1px;border-top:1px dashed #6d7687;box-sizing:border-box;opacity:.7;"></div>
<svg style="left:1566.7px;top:235.8px;" width="10" height="10" viewBox="0 0 10 10"><path d="M1 5h8" stroke="#c8ccd4" stroke-width="1.400"/></svg>
<svg style="left:1585px;top:231.8px;" width="16" height="16" viewBox="0 0 16 16"><path d="M1 4v-3h3M12 1h3v3M15 12v3h-3M4 15h-3v-3" fill="none" stroke="#e4e4e4" stroke-width="1.200"/><path d="M4 6l2.500-2h6v6l-2.500 2h-6z" fill="#e4e4e4"/><path d="M4 6h6v6M10 6l2.500-2" stroke="#9aa" stroke-width=".8" fill="none"/></svg>
<span style="left:1605.3px;top:232.3px;height:16px;line-height:16px;font-size:12px;color:#f2f2f2;white-space:pre;letter-spacing:-0.18px;">Views (todas)</span>
<svg style="left:1583px;top:255.8px;" width="10" height="10" viewBox="0 0 10 10"><path d="M1 5h8M5 1v8" stroke="#c8ccd4" stroke-width="1.400"/></svg>
<span style="left:1601.3px;top:252.3px;height:16px;line-height:16px;font-size:12px;color:#f2f2f2;white-space:pre;letter-spacing:-0.18px;">Floor Plans (Planta de piso)</span>
<svg style="left:1583px;top:275.8px;" width="10" height="10" viewBox="0 0 10 10"><path d="M1 5h8M5 1v8" stroke="#c8ccd4" stroke-width="1.400"/></svg>
<span style="left:1601.3px;top:272.3px;height:16px;line-height:16px;font-size:12px;color:#f2f2f2;white-space:pre;letter-spacing:-0.23px;">3D Views (Vista 3D)</span>
<svg style="left:1583px;top:295.8px;" width="10" height="10" viewBox="0 0 10 10"><path d="M1 5h8M5 1v8" stroke="#c8ccd4" stroke-width="1.400"/></svg>
<span style="left:1601.3px;top:292.3px;height:16px;line-height:16px;font-size:12px;color:#f2f2f2;white-space:pre;letter-spacing:-0.23px;">Elevations (Elevação da construção)</span>
<svg style="left:1583px;top:315.8px;" width="10" height="10" viewBox="0 0 10 10"><path d="M1 5h8M5 1v8" stroke="#c8ccd4" stroke-width="1.400"/></svg>
<span style="left:1601.3px;top:312.3px;height:16px;line-height:16px;font-size:12px;color:#f2f2f2;white-space:pre;letter-spacing:-0.13px;">Sections (Corte da construção)</span>
<svg style="left:1583px;top:335.8px;" width="10" height="10" viewBox="0 0 10 10"><path d="M1 5h8M5 1v8" stroke="#c8ccd4" stroke-width="1.400"/></svg>
<span style="left:1601.3px;top:332.3px;height:16px;line-height:16px;font-size:12px;color:#f2f2f2;white-space:pre;letter-spacing:-0.07px;">Drafting Views (Detalhe)</span>
<svg style="left:1566.7px;top:355.8px;" width="10" height="10" viewBox="0 0 10 10"><path d="M1 5h8M5 1v8" stroke="#c8ccd4" stroke-width="1.400"/></svg>
<svg style="left:1585px;top:352.8px;" width="16" height="16" viewBox="0 0 16 16"><rect x=".5" y=".5" width="15" height="15" fill="#e4e4e4"/><rect x="1.500" y="3.500" width="13" height="11" fill="#3b4552" opacity=".0"/><path d="M3 5h3v3h-3zM3 10h3v3h-3z" fill="none" stroke="#3b4552" stroke-width="1"/><path d="M8 6h5M8 8h3M8 11h5M8 13h3" stroke="#3b4552" stroke-width="1"/></svg>
<span style="left:1605.3px;top:352.3px;height:16px;line-height:16px;font-size:12px;color:#f2f2f2;white-space:pre;letter-spacing:-0.29px;">Legends</span>
<svg style="left:1566.7px;top:375.8px;" width="10" height="10" viewBox="0 0 10 10"><path d="M1 5h8" stroke="#c8ccd4" stroke-width="1.400"/></svg>
<svg style="left:1585px;top:373.8px;" width="16" height="14" viewBox="0 0 16 14"><rect x=".7" y=".7" width="14.600" height="11.600" fill="none" stroke="#e4e4e4" stroke-width="1.400"/><rect x="1" y="1" width="14" height="3" fill="#e4e4e4"/><path d="M1 7h14M1 10h14M5.500 3v10M10.500 3v10" stroke="#e4e4e4" stroke-width="1"/></svg>
<span style="left:1605.3px;top:372.3px;height:16px;line-height:16px;font-size:12px;color:#f2f2f2;white-space:pre;letter-spacing:-0.11px;">Schedules/Quantities (todas)</span>
<svg style="left:1601px;top:392.8px;" width="17" height="16" viewBox="0 0 17 16"><rect x="1" y="1" width="15" height="14" fill="none" stroke="#e4e4e4" stroke-width="1.200" stroke-dasharray="3 1.500"/><rect x="3.500" y="3.500" width="10" height="9" fill="none" stroke="#e4e4e4" stroke-width="1"/></svg>
<span style="left:1621.5px;top:392.3px;height:16px;line-height:16px;font-size:12px;color:#f2f2f2;white-space:pre;letter-spacing:-0.17px;">Lista de folhas</span>
<svg style="left:1566.7px;top:415.8px;" width="10" height="10" viewBox="0 0 10 10"><path d="M1 5h8" stroke="#c8ccd4" stroke-width="1.400"/></svg>
<svg style="left:1585px;top:413.8px;" width="16" height="13" viewBox="0 0 16 13"><path d="M0 1h11l4 4v7h-15z" fill="#e4e4e4"/><path d="M11 1v4h4" fill="none" stroke="#9aa0aa" stroke-width="1"/></svg>
<span style="left:1605.3px;top:412.3px;height:16px;line-height:16px;font-size:12px;color:#f2f2f2;white-space:pre;letter-spacing:-0.24px;">Sheets (todas)</span>
<svg style="left:1583px;top:435.8px;" width="10" height="10" viewBox="0 0 10 10"><path d="M1 5h8M5 1v8" stroke="#c8ccd4" stroke-width="1.400"/></svg>
<span style="left:1601.3px;top:432.3px;height:16px;line-height:16px;font-size:12px;color:#f2f2f2;white-space:pre;letter-spacing:-0.12px;">301 - Furação - Subsolo</span>
<svg style="left:1583px;top:455.8px;" width="10" height="10" viewBox="0 0 10 10"><path d="M1 5h8M5 1v8" stroke="#c8ccd4" stroke-width="1.400"/></svg>
<span style="left:1601.3px;top:452.3px;height:16px;line-height:16px;font-size:12px;color:#f2f2f2;white-space:pre;letter-spacing:-0.17px;">302 - Furação - Térreo</span>
<svg style="left:1583px;top:475.8px;" width="10" height="10" viewBox="0 0 10 10"><path d="M1 5h8M5 1v8" stroke="#c8ccd4" stroke-width="1.400"/></svg>
<span style="left:1601.3px;top:472.3px;height:16px;line-height:16px;font-size:12px;color:#f2f2f2;white-space:pre;letter-spacing:-0.09px;">303 - Furação - 1º Pavimento</span>
<svg style="left:1583px;top:495.8px;" width="10" height="10" viewBox="0 0 10 10"><path d="M1 5h8M5 1v8" stroke="#c8ccd4" stroke-width="1.400"/></svg>
<span style="left:1601.3px;top:492.3px;height:16px;line-height:16px;font-size:12px;color:#f2f2f2;white-space:pre;letter-spacing:-0.09px;">304 - Furação - 2º Pavimento</span>
<svg style="left:1583px;top:515.8px;" width="10" height="10" viewBox="0 0 10 10"><path d="M1 5h8M5 1v8" stroke="#c8ccd4" stroke-width="1.400"/></svg>
<span style="left:1601.3px;top:512.3px;height:16px;line-height:16px;font-size:12px;color:#f2f2f2;white-space:pre;letter-spacing:-0.08px;">305 - Furação - Subtelhado</span>
<svg style="left:1583px;top:535.8px;" width="10" height="10" viewBox="0 0 10 10"><path d="M1 5h8M5 1v8" stroke="#c8ccd4" stroke-width="1.400"/></svg>
<span style="left:1601.3px;top:532.3px;height:16px;line-height:16px;font-size:12px;color:#f2f2f2;white-space:pre;letter-spacing:-0.16px;">306 - Furação - Reservatório</span>
<svg style="left:1566.7px;top:555.8px;" width="10" height="10" viewBox="0 0 10 10"><path d="M1 5h8M5 1v8" stroke="#c8ccd4" stroke-width="1.400"/></svg>
<svg style="left:1585px;top:552.8px;" width="16" height="16" viewBox="0 0 16 16"><rect x="1" y="2" width="6" height="6" fill="#e4e4e4"/><rect x="8.500" y="1" width="6" height="8" fill="#e4e4e4"/><rect x="1" y="9.500" width="13.500" height="5" fill="#e4e4e4"/></svg>
<span style="left:1605.3px;top:552.3px;height:16px;line-height:16px;font-size:12px;color:#f2f2f2;white-space:pre;letter-spacing:-0.33px;">Families</span>
<svg style="left:1566.7px;top:575.8px;" width="10" height="10" viewBox="0 0 10 10"><path d="M1 5h8M5 1v8" stroke="#c8ccd4" stroke-width="1.400"/></svg>
<svg style="left:1585px;top:572.8px;" width="16" height="16" viewBox="0 0 16 16"><path d="M4 1h-3v14h3M12 1h3v14h-3" fill="none" stroke="#e4e4e4" stroke-width="1.300"/><rect x="5" y="6" width="8" height="7" fill="#e4e4e4"/><circle cx="6" cy="6" r="3" fill="#b8bcc4"/></svg>
<span style="left:1605.3px;top:572.3px;height:16px;line-height:16px;font-size:12px;color:#f2f2f2;white-space:pre;letter-spacing:-0.22px;">Groups</span>
<svg style="left:1566.7px;top:595.8px;" width="10" height="10" viewBox="0 0 10 10"><path d="M1 5h8" stroke="#c8ccd4" stroke-width="1.400"/></svg>
<svg style="left:1585px;top:593.8px;" width="16" height="14" viewBox="0 0 16 14"><path d="M7 9l-2 2a2.500 2.500 0 0 1-3.500-3.500l3-3a2.500 2.500 0 0 1 3.500 0M9 5l2-2a2.500 2.500 0 0 1 3.500 3.500l-3 3a2.500 2.500 0 0 1-3.500 0" fill="none" stroke="#d9a47c" stroke-width="1.500"/></svg>
<span style="left:1605.3px;top:592.3px;height:16px;line-height:16px;font-size:12px;color:#f2f2f2;white-space:pre;letter-spacing:-0.30px;">Revit Links</span>
<svg style="left:1603px;top:612.8px;" width="13" height="16" viewBox="0 0 13 16"><path d="M4.500 1h4v7h4l-6 7-6-7h4z" fill="#4fb4f4"/></svg>
<span style="left:1621.5px;top:612.3px;height:16px;line-height:16px;font-size:12px;color:#f2f2f2;white-space:pre;letter-spacing:-0.24px;">2403-1-EPP-V3 - HORIZON (1).rvt</span>
<svg style="left:1603px;top:632.8px;" width="13" height="16" viewBox="0 0 13 16"><path d="M4.500 1h4v7h4l-6 7-6-7h4z" fill="#4fb4f4"/></svg>
<span style="left:1621.5px;top:632.3px;height:16px;line-height:16px;font-size:12px;color:#f2f2f2;white-space:pre;letter-spacing:-0.04px;">HOR-HID-000-MOD.rvt</span>
<div style="left:289px;top:173px;width:1269px;height:21px;background:#475063;"></div>
<div style="left:287.5px;top:173px;width:127.5px;height:21px;background:#222834;"></div>
<svg style="left:1543px;top:177px;" width="12" height="10" viewBox="0 0 12 10"><path d="M1 2h10" stroke="#aab2c0" stroke-width="1.400"/><path d="M1.500 5h9l-4.500 4z" fill="#aab2c0"/></svg>
<svg style="left:293px;top:175px;" width="16" height="16" viewBox="0 0 16 16"><rect x="1" y="1" width="9" height="12" fill="#d8d8d8"/><rect x="5" y="5" width="9" height="10" fill="#d8d8d8"/><path d="M5.500 2v4M5.500 5.500h5" stroke="#9a9a9a" stroke-width=".8" stroke-dasharray="1.500 1" fill="none"/></svg>
<span style="left:316.0px;top:175.5px;height:16px;line-height:16px;font-size:12px;color:#fff;white-space:pre;font-weight:bold;letter-spacing:-0.12px;">6° PAV</span>
<svg style="left:399px;top:178px;" width="12" height="12" viewBox="0 0 12 12"><path d="M1.500 1.500l9 9M10.500 1.500l-9 9" stroke="#c8ccd4" stroke-width="1.500"/></svg>
<div style="left:289px;top:194px;width:1251px;height:795px;background:#ffffff;"></div>
<div style="left:289px;top:193px;width:1251px;height:2px;background:#1e222c;"></div>
<div style="left:400px;top:193px;width:12px;height:1px;background:#9aa0aa;"></div>
<svg style="left:560px;top:240px;shape-rendering:auto;" width="760" height="750" viewBox="560 240 760 750"><path d="M582.5 304.5V797.5M582.5 304.5H761.5M582.5 309.5H761.5M582.5 792.5H657.5M582.5 797.5H657.5M604.5 325.5V776.5M609.5 325.5V771.5M604.5 325.5H761.5M604.5 330.5H761.5M604.5 771.5H652.5M604.5 776.5H652.5M633.5 330.5V364.5M609.5 364.5H633.5M761.5 256.5H979.5M761.5 261.5H979.5M761.5 256.5V279.5M768.5 256.5V279.5M974.5 256.5V279.5M979.5 256.5V279.5M983.5 279.5H1090.5M983.5 284.5H1090.5M1094.5 309.5V350M1099.5 309.5V350M1116 349.5H1144.5M1116 354.5H1144.5M1144.5 349.5V526.5M1139.5 349.5V526.5M1125.5 354.5V496.5M1122 496.5H1144.5M1122 501.5H1144.5M1122 535.5H1135.5M1139.5 633.5V756.5M1144.5 633.5V756.5M1122 642.5H1139.5M604.5 553.5H788.5M604.5 560.5H788.5M780.5 560.5V582.5M780.5 582.5H788.5M788.5 627.5H765.5V650.5H788.5M1110.5 696.5H1087.5V718.5H1110.5M1110.5 682V751.5M1117.5 682V751.5M1121.5 751.5H1265.5M1121.5 756.5H1265.5M1289.5 760.5V941.5M1294.5 760.5V941.5M652.5 783.5V941.5M657.5 783.5V941.5M682.5 945.5H1265.5M682.5 950.5H1265.5M867.5 950.5V971.5H1144.5V950.5" fill="none" stroke="#9a9a9a" stroke-width="1"/><path d="M761.5 279.5H768.5V330.5H761.5ZM650.5 325.5H684.5V334.5H650.5ZM974.5 279.5H983.5V309.5H974.5ZM1090.5 279.5H1099.5V309.5H1090.5ZM643.5 549.5H691.5V560.5H643.5ZM652.5 771.5H682.5V783.5H652.5ZM652.5 941.5H682.5V950.5H652.5ZM867.5 914.5H877.5V950.5H867.5ZM924.5 769.5H940.5V796.5H924.5ZM1037.5 941.5H1073.5V950.5H1037.5ZM1110.5 751.5H1121.5V794.5H1110.5ZM1265.5 751.5H1294.5V760.5H1265.5ZM1265.5 941.5H1294.5V950.5H1265.5ZM653.5 926.5H657.5V936.5H653.5Z" fill="#fff" stroke="#000" stroke-width="1.100"/><path d="M800 526.5H788.5V679.5H800M1135.500 526.5H1144.5V633.5H1122M1135.500 526.5V624.5H1122" fill="none" stroke="#000" stroke-width="1.100"/><circle cx="892.3" cy="268.7" r="4.10" fill="#000"/><rect x="890.19" y="266.59" width="1.100" height="1.100" fill="#fff"/><rect x="893.31" y="266.59" width="1.100" height="1.100" fill="#fff"/><rect x="890.19" y="269.71" width="1.100" height="1.100" fill="#fff"/><rect x="893.31" y="269.71" width="1.100" height="1.100" fill="#fff"/><circle cx="929.5" cy="268.7" r="4.10" fill="#000"/><rect x="927.39" y="266.59" width="1.100" height="1.100" fill="#fff"/><rect x="930.51" y="266.59" width="1.100" height="1.100" fill="#fff"/><rect x="927.39" y="269.71" width="1.100" height="1.100" fill="#fff"/><rect x="930.51" y="269.71" width="1.100" height="1.100" fill="#fff"/><circle cx="905" cy="268.5" r="1.7" fill="#000"/><circle cx="905.5" cy="272.8" r="1.4" fill="#000"/><circle cx="905.5" cy="277" r="2.3" fill="#000"/><circle cx="917.5" cy="269" r="1.9" fill="#000"/><circle cx="917.5" cy="273" r="1.4" fill="#000"/><circle cx="917.5" cy="277.3" r="2.4" fill="#000"/><circle cx="898" cy="305.5" r="2.6" fill="#000"/><circle cx="924.5" cy="305.5" r="2.6" fill="#000"/><rect x="897" y="304.500" width="2" height="1.500" fill="#fff"/><rect x="923.500" y="304.500" width="2" height="1.500" fill="#fff"/><path d="M909 328h5l-.8 2.500h-1.200l-.5-1.200-.5 1.200h-1.500z" fill="#000"/><circle cx="745.8" cy="359.8" r="4.30" fill="#000"/><rect x="743.62" y="357.62" width="1.100" height="1.100" fill="#fff"/><rect x="746.88" y="357.62" width="1.100" height="1.100" fill="#fff"/><rect x="743.62" y="360.88" width="1.100" height="1.100" fill="#fff"/><rect x="746.88" y="360.88" width="1.100" height="1.100" fill="#fff"/><circle cx="752.5" cy="377.5" r="1.4" fill="#000"/><circle cx="752.5" cy="398.5" r="1.2" fill="#000"/><circle cx="752.8" cy="403" r="1.2" fill="#000"/><circle cx="752.5" cy="416.7" r="1.3" fill="#000"/><circle cx="687.5" cy="333.5" r="1.2" fill="#000"/><circle cx="651" cy="566" r="1.1" fill="#000"/><circle cx="654" cy="564.5" r="1.3" fill="#000"/><circle cx="658" cy="566.5" r="1.1" fill="#000"/><circle cx="725.5" cy="562.5" r="1" fill="#000"/><circle cx="729" cy="561.5" r="1.1" fill="#000"/><circle cx="733" cy="562" r="1" fill="#000"/><circle cx="764.5" cy="566.5" r="1.1" fill="#000"/><circle cx="765" cy="580.5" r="1" fill="#000"/><circle cx="772" cy="574" r="1.7" fill="#000"/><circle cx="772.5" cy="579" r="2" fill="#000"/><circle cx="768.8" cy="592.5" r="4.10" fill="#000"/><rect x="766.69" y="590.39" width="1.100" height="1.100" fill="#fff"/><rect x="769.81" y="590.39" width="1.100" height="1.100" fill="#fff"/><rect x="766.69" y="593.51" width="1.100" height="1.100" fill="#fff"/><rect x="769.81" y="593.51" width="1.100" height="1.100" fill="#fff"/><circle cx="770.5" cy="607.5" r="1.1" fill="#000"/><circle cx="771" cy="611.5" r="1.1" fill="#000"/><circle cx="1125" cy="643.5" r="1.1" fill="#000"/><circle cx="1054.5" cy="737.3" r="2.6" fill="#000"/><circle cx="1075" cy="725" r="1" fill="#000"/><circle cx="1091" cy="732" r="3.90" fill="#000"/><rect x="1088.97" y="729.97" width="1.100" height="1.100" fill="#fff"/><rect x="1091.93" y="729.97" width="1.100" height="1.100" fill="#fff"/><rect x="1088.97" y="732.93" width="1.100" height="1.100" fill="#fff"/><rect x="1091.93" y="732.93" width="1.100" height="1.100" fill="#fff"/><circle cx="1095.5" cy="725.5" r="1" fill="#000"/><circle cx="1159.5" cy="759.7" r="1.2" fill="#000"/><circle cx="1210" cy="757.5" r="1" fill="#000"/><circle cx="1205.5" cy="764" r="4.10" fill="#000"/><rect x="1203.39" y="761.89" width="1.100" height="1.100" fill="#fff"/><rect x="1206.51" y="761.89" width="1.100" height="1.100" fill="#fff"/><rect x="1203.39" y="765.01" width="1.100" height="1.100" fill="#fff"/><rect x="1206.51" y="765.01" width="1.100" height="1.100" fill="#fff"/><circle cx="1270" cy="798.3" r="4.10" fill="#000"/><rect x="1267.89" y="796.19" width="1.100" height="1.100" fill="#fff"/><rect x="1271.01" y="796.19" width="1.100" height="1.100" fill="#fff"/><rect x="1267.89" y="799.31" width="1.100" height="1.100" fill="#fff"/><rect x="1271.01" y="799.31" width="1.100" height="1.100" fill="#fff"/><circle cx="1127" cy="788" r="2.4" fill="#000"/><circle cx="1105" cy="800.5" r="3.50" fill="#000"/><rect x="1103.12" y="798.62" width="1.100" height="1.100" fill="#fff"/><rect x="1105.78" y="798.62" width="1.100" height="1.100" fill="#fff"/><rect x="1103.12" y="801.28" width="1.100" height="1.100" fill="#fff"/><rect x="1105.78" y="801.28" width="1.100" height="1.100" fill="#fff"/><circle cx="1110" cy="800.5" r="3.50" fill="#000"/><rect x="1108.12" y="798.62" width="1.100" height="1.100" fill="#fff"/><rect x="1110.78" y="798.62" width="1.100" height="1.100" fill="#fff"/><rect x="1108.12" y="801.28" width="1.100" height="1.100" fill="#fff"/><rect x="1110.78" y="801.28" width="1.100" height="1.100" fill="#fff"/><circle cx="1092.5" cy="788" r="1" fill="#000"/><circle cx="1093.5" cy="791.5" r="1" fill="#000"/><circle cx="1092" cy="795" r="1" fill="#000"/><circle cx="798.5" cy="763.3" r="1" fill="#000"/><circle cx="827.3" cy="767" r="3.90" fill="#000"/><rect x="825.27" y="764.97" width="1.100" height="1.100" fill="#fff"/><rect x="828.23" y="764.97" width="1.100" height="1.100" fill="#fff"/><rect x="825.27" y="767.93" width="1.100" height="1.100" fill="#fff"/><rect x="828.23" y="767.93" width="1.100" height="1.100" fill="#fff"/><circle cx="839.5" cy="760.5" r="2.90" fill="#000"/><rect x="837.85" y="758.85" width="1.100" height="1.100" fill="#fff"/><rect x="840.05" y="758.85" width="1.100" height="1.100" fill="#fff"/><rect x="837.85" y="761.05" width="1.100" height="1.100" fill="#fff"/><rect x="840.05" y="761.05" width="1.100" height="1.100" fill="#fff"/><circle cx="861.5" cy="760" r="1.6" fill="#000"/><circle cx="861.5" cy="764" r="1.4" fill="#000"/><circle cx="861.5" cy="768" r="1.6" fill="#000"/><circle cx="922.3" cy="857" r="1.3" fill="#000"/><circle cx="872" cy="891" r="2.3" fill="#000"/><circle cx="916" cy="905.3" r="4.10" fill="#000"/><rect x="913.89" y="903.19" width="1.100" height="1.100" fill="#fff"/><rect x="917.01" y="903.19" width="1.100" height="1.100" fill="#fff"/><rect x="913.89" y="906.31" width="1.100" height="1.100" fill="#fff"/><rect x="917.01" y="906.31" width="1.100" height="1.100" fill="#fff"/><circle cx="868.5" cy="908" r="1.2" fill="#000"/><circle cx="872" cy="907.5" r="1.4" fill="#000"/><circle cx="876" cy="908" r="1.2" fill="#000"/><circle cx="879" cy="908" r="1" fill="#000"/><circle cx="692.5" cy="933.5" r="2.90" fill="#000"/><rect x="690.85" y="931.85" width="1.100" height="1.100" fill="#fff"/><rect x="693.05" y="931.85" width="1.100" height="1.100" fill="#fff"/><rect x="690.85" y="934.05" width="1.100" height="1.100" fill="#fff"/><rect x="693.05" y="934.05" width="1.100" height="1.100" fill="#fff"/><circle cx="729.5" cy="943.5" r="1" fill="#000"/><circle cx="660.5" cy="938.5" r="2.70" fill="#000"/><rect x="658.92" y="936.92" width="1.100" height="1.100" fill="#fff"/><rect x="660.98" y="936.92" width="1.100" height="1.100" fill="#fff"/><rect x="658.92" y="938.98" width="1.100" height="1.100" fill="#fff"/><rect x="660.98" y="938.98" width="1.100" height="1.100" fill="#fff"/></svg>
<div style="left:1505px;top:196px;width:34px;height:117px;background:#f4f4f4;border:2px solid #b4b4b4;box-sizing:border-box;border-radius:5px;"></div>
<svg style="left:1505px;top:195px;" width="34" height="117" viewBox="0 0 34 117"><circle cx="27" cy="7.500" r="3.500" fill="#fff" stroke="#bdbdbd" stroke-width="1.200"/><path d="M25 6l4 4M29 6l-4 4" stroke="#bdbdbd" stroke-width="1"/><path d="M6 30c0-6 3-8 8-8h9v10c0 5-3 8-8 8h-2c-5 0-7-3-7-7z" fill="#f0f0f0" stroke="#b0b0b0" stroke-width="1.300"/><circle cx="14.500" cy="31" r="4.500" fill="#fff" stroke="#a8a8a8" stroke-width="1.300"/><path d="M11.500 34.500l-2.500 3" stroke="#a8a8a8" stroke-width="1.300"/><path d="M14 51h5l-2.500 3z" fill="#909090"/><path d="M4 59.500h26" stroke="#c4c4c4" stroke-width="1"/><rect x="9.500" y="67.500" width="10" height="10" fill="#b5dba0" stroke="#a5c893" stroke-width="1"/><circle cx="19.700" cy="78" r="3.300" fill="#fff" stroke="#a0a0a0" stroke-width="1.200"/><path d="M22.200 80.500l3 3.500" stroke="#a0a0a0" stroke-width="1.500"/><path d="M14 93h5l-2.500 3z" fill="#909090"/><circle cx="27" cy="110" r="3.500" fill="#fff" stroke="#bdbdbd" stroke-width="1.200"/><path d="M24 110h6" stroke="#bdbdbd" stroke-width="1.400"/></svg>
<span style="left:1522.0px;top:231.0px;height:10px;line-height:10px;font-size:9px;color:#7aa6d8;white-space:pre;font-weight:bold;letter-spacing:0.50px;">2D</span>
<div style="left:798px;top:349.5px;width:324px;height:332.5px;background:#ffffff;border-radius:9px;box-shadow:2px 3px 9px rgba(0,0,0,.33),0 0 2px rgba(0,0,0,.25);overflow:hidden;"><div style="left:0;top:0;width:324px;height:39.5px;background:#e9e9e9;"></div></div>
<div style="left:942px;top:344px;width:36px;height:12.5px;background:#1e1e1e;border:1px solid #3c3c3c;box-sizing:border-box;"></div>
<div style="left:949px;top:348.5px;width:22px;height:1px;background:#8a8a8a;"></div>
<div style="left:949px;top:351.5px;width:22px;height:1px;background:#8a8a8a;"></div>
<svg style="left:812px;top:354px;" width="32" height="28" viewBox="0 0 32 28"><circle cx="12.500" cy="17.800" r="7.500" fill="none" stroke="#4a63c8" stroke-width="1.300"/><path d="M7.500 12.800l10 10M17.500 12.800l-10 10" stroke="#4a63c8" stroke-width="1.200"/><path d="M26.300 2.500v22" stroke="#4a63c8" stroke-width="1.300"/><path d="M13 2.500v5M13 5h13" stroke="#4a63c8" stroke-width="1.100"/><path d="M13.500 5l2.500-1.500v3zM26 5l-2.500-1.500v3z" fill="#4a63c8"/></svg>
<span style="left:852.0px;top:363.0px;height:16px;line-height:16px;font-size:12px;color:#2a2a2a;white-space:pre;letter-spacing:0.11px;text-shadow:0 0 .4px #2a2a2a;">Cotar furos</span>
<svg style="left:1063px;top:364px;" width="46" height="14" viewBox="0 0 46 14"><path d="M2.500 8h8.500" stroke="#444" stroke-width="1.200"/><path d="M33 2.200l7.500 7.500M40.500 2.200l-7.500 7.500" stroke="#444" stroke-width="1"/></svg>
<span style="left:821.0px;top:411.8px;height:16px;line-height:16px;font-size:12px;color:#2f3542;white-space:pre;letter-spacing:-0.13px;-webkit-text-stroke:.45px #2f3542;">Referência para as cotas</span>
<span style="left:979.4px;top:411.8px;height:16px;line-height:16px;font-size:12px;color:#2f3542;white-space:pre;letter-spacing:-0.13px;-webkit-text-stroke:.45px #2f3542;">Escopo de execução</span>
<div style="left:821.1px;top:435.1px;width:13.8px;height:13.8px;background:#fff;border:1px solid #8c8c8c;box-sizing:border-box;border-radius:50%;"></div>
<span style="left:839.3px;top:434.0px;height:16px;line-height:16px;font-size:12px;color:#3a3f4a;white-space:pre;letter-spacing:-0.34px;">Vigas</span>
<div style="left:821.1px;top:457.8px;width:13.8px;height:13.8px;background:#fff;border:1px solid #8c8c8c;box-sizing:border-box;border-radius:50%;"></div>
<span style="left:839.3px;top:456.7px;height:16px;line-height:16px;font-size:12px;color:#3a3f4a;white-space:pre;letter-spacing:-0.40px;">Pilares</span>
<div style="left:821.1px;top:480.1px;width:13.8px;height:13.8px;background:#fff;border:1px solid #8c8c8c;box-sizing:border-box;border-radius:50%;"></div>
<div style="left:824.8px;top:483.8px;width:6.4px;height:6.4px;background:#2f6fe0;border-radius:50%;"></div>
<span style="left:839.3px;top:479.0px;height:16px;line-height:16px;font-size:12px;color:#3a3f4a;white-space:pre;letter-spacing:-0.07px;">Ambos</span>
<div style="left:979.1px;top:435.1px;width:13.8px;height:13.8px;background:#fff;border:1px solid #8c8c8c;box-sizing:border-box;border-radius:50%;"></div>
<div style="left:982.8px;top:438.8px;width:6.4px;height:6.4px;background:#2f6fe0;border-radius:50%;"></div>
<span style="left:997.3px;top:434.0px;height:16px;line-height:16px;font-size:12px;color:#3a3f4a;white-space:pre;letter-spacing:-0.17px;">Furos na vista atual</span>
<div style="left:979.1px;top:457.8px;width:13.8px;height:13.8px;background:#fff;border:1px solid #8c8c8c;box-sizing:border-box;border-radius:50%;"></div>
<span style="left:997.3px;top:456.7px;height:16px;line-height:16px;font-size:12px;color:#3a3f4a;white-space:pre;letter-spacing:-0.19px;">Seleção de furos</span>
<span style="left:821.0px;top:508.8px;height:16px;line-height:16px;font-size:12px;color:#2f3542;white-space:pre;letter-spacing:0.14px;-webkit-text-stroke:.45px #2f3542;">Tipo da cota</span>
<div style="left:821px;top:533.6px;width:277.7px;height:27px;background:#fff;border:1px solid #9a9a9a;box-sizing:border-box;border-radius:5px;"></div>
<span style="left:829.0px;top:539.6px;height:16px;line-height:16px;font-size:12px;color:#2a2a2a;white-space:pre;">Diagonal - 1,5 mm Arial</span>
<svg style="left:1081px;top:543px;" width="12" height="9" viewBox="0 0 12 9"><path d="M2 2.500l4 4 4-4" fill="none" stroke="#444" stroke-width="1.300"/></svg>
<span style="left:821.0px;top:583.0px;height:16px;line-height:16px;font-size:12px;color:#2f3542;white-space:pre;letter-spacing:0.10px;-webkit-text-stroke:.45px #2f3542;">Distância de agrupamento (cm)</span>
<div style="left:1011px;top:577.3px;width:60px;height:27.5px;background:#fff;border:1.300px solid #5a80d8;box-sizing:border-box;border-radius:6px;"></div>
<span style="left:1026.9px;top:583.0px;height:16px;line-height:16px;font-size:12px;color:#2a2a2a;white-space:pre;letter-spacing:-0.35px;">20,00</span>
<div style="left:1040.6px;top:584.5px;width:1px;height:13px;background:#000;"></div>
<svg style="left:821px;top:621px;" width="39" height="39" viewBox="0 0 39 39"><rect x="14.4" y="1.4" width="9.600" height="9.600" fill="none" stroke="#3f5fd0" stroke-width="2.800"/><rect x="1.4" y="14.1" width="9.600" height="9.600" fill="none" stroke="#3f5fd0" stroke-width="2.800"/><rect x="27.0" y="14.1" width="9.600" height="9.600" fill="none" stroke="#3f5fd0" stroke-width="2.800"/><rect x="14.4" y="26.7" width="9.600" height="9.600" fill="none" stroke="#3f5fd0" stroke-width="2.800"/><rect x="16.300" y="16" width="5.800" height="5.800" fill="#3f5fd0"/><rect x="4.6" y="4.6" width="3.300" height="3.300" fill="#3f5fd0"/><rect x="30" y="4.6" width="3.300" height="3.300" fill="#3f5fd0"/><rect x="4.6" y="30" width="3.300" height="3.300" fill="#3f5fd0"/><rect x="30" y="30" width="3.300" height="3.300" fill="#3f5fd0"/></svg>
<div style="left:1028.3px;top:623.8px;width:70.7px;height:32.2px;background:#1b4fcf;border-radius:7px;"></div>
<span style="left:1040.6px;top:631.6px;height:16px;line-height:16px;font-size:13px;color:#fff;white-space:pre;font-weight:bold;letter-spacing:-0.74px;">Executar</span>
<svg style="left:1064px;top:626px;" width="26" height="28" viewBox="0 0 26 28"><path d="M9.500 3.500c0-1.300 2.600-1.300 2.600 0v8.500l.6-3.200c.2-1 2.300-.8 2.300.3v3l.7-2.300c.3-.9 2.100-.6 2.100.4v2.600l.7-1.600c.4-.8 1.800-.5 1.800.4v6.500c0 3.500-2 6-5 6h-3c-2 0-3-1-4.500-3.500l-3.500-5.500c-.8-1.200.8-2.300 1.800-1.300l3.400 3z" fill="#fff" stroke="#000" stroke-width="1.200" stroke-linejoin="round"/></svg>
<div style="left:284px;top:989px;width:1274px;height:18px;background:#373f4e;"></div>
<div style="left:627px;top:989px;width:913px;height:18px;background:#2e3543;"></div>
<div style="left:1540px;top:989px;width:18px;height:18px;background:#343c4a;"></div>
<div style="left:283px;top:190px;width:2px;height:818px;background:#323947;"></div>
<div style="left:285px;top:173px;width:2px;height:835px;background:#566073;"></div>
<div style="left:287px;top:194px;width:2px;height:814px;background:#2a303c;"></div>
<div style="left:0px;top:1006.5px;width:1920px;height:1.5px;background:#2a303c;"></div>
<div style="left:0px;top:1008px;width:1920px;height:24.5px;background:#3b4552;"></div>
<span style="left:316.5px;top:990.3px;height:16px;line-height:16px;font-size:12px;color:#f0f0f0;white-space:pre;letter-spacing:-0.59px;">1 : 50</span>
<svg style="left:360px;top:985px;" width="300" height="24" viewBox="360 985 300 24"><rect x="372" y="993" width="16" height="10" fill="#d8d8d8"/><rect x="372" y="993" width="2" height="2" fill="#9a9a9a"/><rect x="372" y="997" width="2" height="2" fill="#9a9a9a"/><rect x="372" y="1001" width="2" height="2" fill="#9a9a9a"/><rect x="374" y="995" width="2" height="2" fill="#9a9a9a"/><rect x="374" y="999" width="2" height="2" fill="#9a9a9a"/><rect x="376" y="993" width="2" height="2" fill="#9a9a9a"/><rect x="376" y="997" width="2" height="2" fill="#9a9a9a"/><rect x="376" y="1001" width="2" height="2" fill="#9a9a9a"/><rect x="378" y="995" width="2" height="2" fill="#9a9a9a"/><rect x="378" y="999" width="2" height="2" fill="#9a9a9a"/><rect x="380" y="993" width="2" height="2" fill="#9a9a9a"/><rect x="380" y="997" width="2" height="2" fill="#9a9a9a"/><rect x="380" y="1001" width="2" height="2" fill="#9a9a9a"/><rect x="382" y="995" width="2" height="2" fill="#9a9a9a"/><rect x="382" y="999" width="2" height="2" fill="#9a9a9a"/><rect x="384" y="993" width="2" height="2" fill="#9a9a9a"/><rect x="384" y="997" width="2" height="2" fill="#9a9a9a"/><rect x="384" y="1001" width="2" height="2" fill="#9a9a9a"/><rect x="386" y="995" width="2" height="2" fill="#9a9a9a"/><rect x="386" y="999" width="2" height="2" fill="#9a9a9a"/><path d="M399.500 995.500h9v9h-9zM399.500 995.500l4-3.500h9l-4 3.500M412.500 992v9l-4 3.500" fill="none" stroke="#e4e4e4" stroke-width="1.100"/><path d="M403.500 998v4h4" fill="none" stroke="#e4e4e4" stroke-width=".9"/><circle cx="431" cy="997" r="3.500" fill="#7f8794"/><path d="M431 991v12M425 997h12M427 993l8 8M435 993l-8 8" stroke="#7f8794" stroke-width="1.200"/><rect x="433" y="998" width="6" height="4" fill="#7f8794"/><rect x="435" y="1003" width="3" height="2.500" fill="#7f8794"/><circle cx="457" cy="996" r="5" fill="#7f8794"/><circle cx="462" cy="999" r="3.500" fill="#69717f"/><rect x="451" y="1001" width="9" height="3" fill="#1c2029"/><rect x="461" y="1003" width="3" height="2.500" fill="#7f8794"/><path d="M481.500 1005v-9.500h10" fill="none" stroke="#e4e4e4" stroke-width="1.800"/><path d="M476 1001h3M484 1001h4v-4.500M488 993.500v-3.500" fill="none" stroke="#4aa0e8" stroke-width="1.500"/><path d="M507.500 1005v-9.500h9" fill="none" stroke="#e4e4e4" stroke-width="1.800"/><path d="M502 1001h4M513.500 990v4" fill="none" stroke="#4aa0e8" stroke-width="1.500"/><circle cx="514.500" cy="999.500" r="3.400" fill="#4fd0e0"/><path d="M513 1003.500h3l-1.500 2z" fill="#fff"/><circle cx="532.500" cy="1000" r="2.800" fill="none" stroke="#7f8794" stroke-width="1.400"/><circle cx="540" cy="1000" r="2.800" fill="none" stroke="#7f8794" stroke-width="1.400"/><path d="M530 998l2-4M542.500 998l-2-4M535 999.500h2.500" stroke="#7f8794" stroke-width="1.200" fill="none"/><circle cx="562.500" cy="996.500" r="4.300" fill="#4fd0e0"/><path d="M560.500 1001h4v2.500l-2 1.500-2-1.500z" fill="#fff"/><path d="M582.500 992.500h8l3 3v5h-11z" fill="#e4e4e4"/><path d="M585 995h5M585 997.500h5" stroke="#555" stroke-width="1"/><rect x="589.500" y="999.500" width="5.500" height="5" fill="none" stroke="#e4e4e4" stroke-width="1.100" stroke-dasharray="2 1.500"/><path d="M607.500 991v9M619.500 991v5M608 993.500h11" stroke="#e4e4e4" stroke-width="1.200" fill="none"/><path d="M607 1000.500h7" stroke="#e4e4e4" stroke-width="1.200" stroke-dasharray="2 1.500"/><circle cx="619" cy="1000" r="3.400" fill="#4fd0e0"/><path d="M617.500 1004h3l-1.500 2z" fill="#fff"/><path d="M637 994l-3 4 3 4" fill="none" stroke="#6d7687" stroke-width="1.600"/><path d="M627.500 989v18M642.500 991v14" stroke="#3b4552" stroke-width="1"/></svg>
<div style="left:1075px;top:993.3px;width:18px;height:8.4px;background:#7d879a;border-radius:4px;"></div>
<div style="left:1523px;top:990px;width:1px;height:16px;background:#465062;"></div>
<svg style="left:1526px;top:991px;" width="12" height="13" viewBox="0 0 12 13"><path d="M4 2l4 4.500-4 4.500" fill="none" stroke="#8f98a6" stroke-width="1.800"/></svg>
<svg style="left:1544px;top:993px;" width="12" height="12" viewBox="0 0 12 12"><rect x="8" y="4" width="2" height="2" fill="#8f98a6"/><rect x="8" y="8" width="2" height="2" fill="#8f98a6"/><rect x="4" y="8" width="2" height="2" fill="#8f98a6"/></svg>
<span style="left:2.0px;top:1013.0px;height:16px;line-height:16px;font-size:12px;color:#f2f2f2;white-space:pre;letter-spacing:-0.24px;">Click to select, TAB for alternates, CTRL adds, SHIFT unselects.</span>
<svg style="left:880px;top:1008px;" width="1000" height="24" viewBox="880 1008 1000 24"><path d="M897 1017l5-3 4 2.500v8l-4 3-5-3z" fill="#8fc9f0"/><path d="M902 1014l4 2.500v8l-4 3z" fill="#5fa0d8"/><path d="M904 1019l4-2 3 2v7l-3 2-4-2z" fill="#7fd07f"/><path d="M906.500 1013l3 2v4l-3-1.500z" fill="#f0b070"/><path d="M909 1026l4-4" stroke="#58a8e8" stroke-width="2"/><path d="M1115.500 1020.500l3 3.200 3-3.200" fill="none" stroke="#5d6779" stroke-width="1.800"/><rect x="1141" y="1012.200" width="8" height="4.800" fill="#a8aeb8"/><path d="M1147 1017l-3.500 4v-4z" fill="#a8aeb8"/><rect x="1137.300" y="1018.400" width="5.200" height="5" fill="#a8aeb8"/><rect x="1135" y="1023" width="9.200" height="4" fill="#a8aeb8"/><rect x="1186" y="1013" width="16" height="15" fill="#ededed"/><path d="M1188.500 1018h2M1192 1018h8M1188.500 1021.500h2M1192 1021.500h8M1188.500 1025h2M1192 1025h8" stroke="#3b4552" stroke-width="1.300"/><rect x="1214" y="1012.500" width="13" height="11" fill="none" stroke="#8f98a6" stroke-width="1.300"/><path d="M1216 1016h9M1216 1019h9M1216 1022h5" stroke="#8f98a6" stroke-width="1"/><path d="M1212 1024h7M1216 1022v6" stroke="#8f98a6" stroke-width="1.400"/><path d="M1431 1020l3 3.200 3-3.200" fill="none" stroke="#5d6779" stroke-width="1.800"/><path d="M1670 1014.500h4a2.200 2.200 0 0 1 0 4.500h-1M1678 1014.500h-4" fill="none" stroke="#d9a47c" stroke-width="1.300"/><rect x="1667.500" y="1014" width="6" height="4.500" rx="2.200" fill="none" stroke="#d9a47c" stroke-width="1.200"/><rect x="1674.500" y="1014" width="6" height="4.500" rx="2.200" fill="none" stroke="#d9a47c" stroke-width="1.200"/><path d="M1674 1016v9.500l2.300-2 1.700 4 1.700-.8-1.700-3.800h3z" fill="#fff" stroke="#2a303c" stroke-width=".5"/><path d="M1693 1020l6-6v12zM1693 1024h8" fill="#6ab4ec"/><path d="M1703 1013l5 5M1708 1013l-5 5" stroke="#e8454f" stroke-width="1.600"/><path d="M1700 1016v9.500l2.300-2 1.700 4 1.700-.8-1.700-3.800h3z" fill="#fff" stroke="#2a303c" stroke-width=".5"/><path d="M1721 1013h7v2h-1.500v4h2v1.500h-8v-1.500h2v-4h-1.500z" fill="#c8ccd4"/><path d="M1726 1016v9.500l2.300-2 1.700 4 1.700-.8-1.700-3.800h3z" fill="#fff" stroke="#2a303c" stroke-width=".5"/><path d="M1746 1018l6-4v10l-6 4z" fill="#6ab4ec"/><path d="M1755 1013l5 5M1760 1013l-5 5" stroke="#e8454f" stroke-width="1.600"/><path d="M1752 1016v9.500l2.300-2 1.700 4 1.700-.8-1.700-3.800h3z" fill="#fff" stroke="#2a303c" stroke-width=".5"/><path d="M1778.500 1013v12M1772 1019h9M1778.500 1012l-2 2.500h4zM1771 1019l2.500-2v4z" stroke="#fff" stroke-width="1" fill="#fff"/><path d="M1779 1016v9.500l2.300-2 1.700 4 1.700-.8-1.700-3.800h3z" fill="#fff" stroke="#2a303c" stroke-width=".5"/><circle cx="1810.5" cy="1020.0" r="1.200" fill="#5d6779"/><circle cx="1808.7" cy="1024.2" r="1.200" fill="#5d6779"/><circle cx="1804.5" cy="1026.0" r="1.200" fill="#5d6779"/><circle cx="1800.3" cy="1024.2" r="1.200" fill="#5d6779"/><circle cx="1798.5" cy="1020.0" r="1.200" fill="#5d6779"/><circle cx="1800.3" cy="1015.8" r="1.200" fill="#5d6779"/><circle cx="1804.5" cy="1014.0" r="1.200" fill="#5d6779"/><circle cx="1808.7" cy="1015.8" r="1.200" fill="#5d6779"/><path d="M1820 1013h17l-6.500 7v8l-4-2v-6z" fill="#c8ccd4"/></svg>
<span style="left:1151.0px;top:1013.0px;height:16px;line-height:16px;font-size:13px;color:#a8aeb8;white-space:pre;font-family:"Liberation Serif",serif;">:0</span>
<span style="left:1239.3px;top:1013.5px;height:16px;line-height:16px;font-size:12px;color:#8f98a6;white-space:pre;letter-spacing:0.14px;">Main Model</span>
<span style="left:1838.5px;top:1013.5px;height:16px;line-height:16px;font-size:13px;color:#f0f0f0;white-space:pre;font-family:"Liberation Serif",serif;">:0</span>
<div style="left:0px;top:1032.5px;width:1920px;height:47.5px;background:#161f5e;"></div>
<svg style="left:18px;top:1038px;" width="30" height="32" viewBox="0 0 30 32"><path d="M24 12c3 8-1 15-9 16.500c-6 1-11-1.500-13-5c5 .5 9-.5 12-3.500c3-3 6-6 10-8z" fill="#f5a020"/><path d="M24 12c3 8-1 15-9 16.500c4-3 7-9 9-16.500z" fill="#f8c050" opacity=".7"/></svg>
<div style="left:30px;top:1039.5px;width:16px;height:15px;background:#f08c9c;border-radius:8px;"></div>
<span style="left:32.5px;top:1041.0px;height:12px;line-height:12px;font-size:10px;color:#30101a;white-space:pre;">9+</span>
<span style="left:50.5px;top:1040.0px;height:16px;line-height:16px;font-size:12px;color:#fff;white-space:pre;letter-spacing:-0.45px;">20°C</span>
<span style="left:50.0px;top:1056.0px;height:16px;line-height:16px;font-size:12px;color:#fff;white-space:pre;letter-spacing:0.06px;">Limpo</span>
<svg style="left:545px;top:1040px;" width="36" height="32" viewBox="545 1040 36 32"><defs><linearGradient id="wg" gradientUnits="userSpaceOnUse" x1="550" y1="1044" x2="574" y2="1068"><stop offset="0" stop-color="#6fdcff"/><stop offset="1" stop-color="#1f9aee"/></linearGradient></defs><rect x="550.8" y="1044.6" width="11" height="11" fill="url(#wg)"/><rect x="563" y="1044.6" width="11" height="11" fill="url(#wg)"/><rect x="550.8" y="1056.8" width="11" height="11" fill="url(#wg)"/><rect x="563" y="1056.8" width="11" height="11" fill="url(#wg)"/></svg>
<div style="left:587px;top:1040px;width:220px;height:32px;background:#2b3476;border-radius:16px;border-top:1px solid #3a4488;box-sizing:border-box;"></div>
<svg style="left:598px;top:1047px;" width="18" height="18" viewBox="0 0 18 18"><circle cx="7.500" cy="7.500" r="5.300" fill="none" stroke="#e4e6f4" stroke-width="1.500"/><path d="M11.500 11.500l4.500 4.500" stroke="#e4e6f4" stroke-width="1.700"/></svg>
<span style="left:624.0px;top:1047.2px;height:18px;line-height:18px;font-size:14px;color:#dcdef0;white-space:pre;letter-spacing:-0.44px;">Pesquisar</span>
<svg style="left:752px;top:1042px;" width="52" height="30" viewBox="0 0 52 30"><path d="M4 16c-3-6 0-12 5-12c3 0 4 3 2 6c-2 3-1 8 3 11c-4 2-8 0-10-5z" fill="#e8862a"/><path d="M13 22c-2-5 2-10 7-11l2-4 2 1 2-1 1 4c2 1 3 3 2 5l-4 2-1 4 2 3h-8c-3 0-5-1-5-3z" fill="#f09838"/><path d="M22 12l6 1 0 3-5 2z" fill="#d87020"/><rect x="29" y="11" width="14" height="10" rx="2" fill="#c4c6cc"/><rect x="38" y="8" width="9" height="15" rx="2" fill="#dcdee4"/><path d="M41 23h3v4h-3z" fill="#b0b2b8"/><circle cx="42.500" cy="28" r="1.500" fill="#c8cad0"/></svg>
<div style="left:819px;top:1052px;width:17px;height:15px;background:#5c6270;border-radius:2px;"></div>
<div style="left:826px;top:1045px;width:18px;height:17px;background:#f4f4f8;border-radius:2px;"></div>
<svg style="left:862px;top:1042px;" width="28" height="30" viewBox="0 0 28 30"><defs><linearGradient id="m3" x1="0" y1="0" x2="1" y2="1"><stop offset="0" stop-color="#3fc8f0"/><stop offset=".5" stop-color="#4a6ff0"/><stop offset="1" stop-color="#e05cc8"/></linearGradient></defs><path d="M4 18c0-8 4-15 10-15c5 0 6 4 8 8c2 4 4 6 4 9c0 3-3 4-6 4h-14c-2 0-2-3-2-6z" fill="url(#m3)"/><path d="M4 18c0-8 4-15 10-15l-4 21h-4c-2 0-2-3-2-6z" fill="#38d0c8" opacity=".8"/><path d="M18 8c3 0 8 6 8 12c0 3-3 4-6 4z" fill="#e860c0" opacity=".8"/><rect x="5" y="19" width="20" height="8" fill="#0c0c14"/></svg>
<span style="left:868.0px;top:1061.0px;height:8px;line-height:8px;font-size:7px;color:#fff;white-space:pre;font-weight:bold;letter-spacing:0.12px;">M365</span>
<svg style="left:906px;top:1043px;" width="28" height="26" viewBox="0 0 28 26"><path d="M1 3c0-1 1-2 2-2h7l3 3h11c1 0 2 1 2 2v3h-25z" fill="#e8a820"/><rect x="1" y="6" width="25" height="18" rx="2" fill="#fcd04c"/><rect x="7" y="17" width="13" height="7" rx="1.500" fill="#2f80d8"/><rect x="9" y="19" width="9" height="2" fill="#68b0f0"/></svg>
<div style="left:916.0px;top:1072px;width:6px;height:2.5px;background:#8a8fa8;border-radius:1.500px;"></div>
<svg style="left:950px;top:1043px;" width="28" height="26" viewBox="0 0 28 26"><path d="M8 6l8-5 10 6v12c0 2-1 3-3 3h-13z" fill="#1a70c8"/><path d="M10 9l16-2v12c0 2-1 3-3 3h-13z" fill="#38a0f0"/><path d="M26 8l-9 7-7-3v7c0 2 1 3 3 3h10c2 0 3-1 3-3z" fill="#60c0f8"/><rect x="1" y="7" width="14" height="14" rx="2" fill="#0f5cb8"/></svg>
<span style="left:953.5px;top:1050.0px;height:14px;line-height:14px;font-size:12px;color:#fff;white-space:pre;font-weight:bold;">O</span>
<div style="left:959.7px;top:1072px;width:6px;height:2.5px;background:#8a8fa8;border-radius:1.500px;"></div>
<svg style="left:993.7px;top:1043px;" width="26" height="26" viewBox="0 0 26 26"><circle cx="13" cy="13" r="12" fill="#e8453c"/><path d="M13 13L2.600 7a12 12 0 0 0 4.400 16.400z" fill="#34a853"/><path d="M13 13l-6 10.400a12 12 0 0 0 16.400-4.400a12 12 0 0 0 1.600-6z" fill="#fbbc05"/><path d="M13 13h12a12 12 0 0 0-1.600-6z" fill="#e8453c"/><circle cx="13" cy="13" r="5.500" fill="#fff"/><circle cx="13" cy="13" r="4.300" fill="#4285f4"/></svg>
<div style="left:1003.7px;top:1072px;width:6px;height:2.5px;background:#8a8fa8;border-radius:1.500px;"></div>
<div style="left:1009px;top:1039px;width:14px;height:14px;background:#4a5cc8;border-radius:7px;"></div>
<svg style="left:1009px;top:1039px;" width="14" height="14" viewBox="0 0 14 14"><rect x="5.500" y="2.500" width="3" height="3" fill="none" stroke="#e0e4ff" stroke-width=".9"/><rect x="5.500" y="8.500" width="3" height="3" fill="none" stroke="#e0e4ff" stroke-width=".9"/><rect x="2.500" y="5.500" width="3" height="3" fill="none" stroke="#e0e4ff" stroke-width=".9"/><rect x="8.500" y="5.500" width="3" height="3" fill="none" stroke="#e0e4ff" stroke-width=".9"/></svg>
<svg style="left:1037px;top:1043px;" width="28" height="28" viewBox="0 0 28 28"><path d="M14 2a11.500 11.500 0 0 0-10 17.500l-2 6.500 6.800-1.800a11.500 11.500 0 1 0 5.200-22.200z" fill="#2fc85a"/><path d="M14 4.500a9 9 0 0 0-7.600 14l-1.200 3.800 4-1.100a9 9 0 1 0 4.800-16.700z" fill="#161f5e"/><path d="M14 6a7.500 7.500 0 0 0-6.200 11.800l-.8 2.600 2.700-.8a7.500 7.500 0 1 0 4.300-13.600z" fill="#2fc85a"/><path d="M10.500 9.500c.5-.5 1.200-.4 1.500.2l.7 1.600c.2.400 0 .8-.3 1.100l-.5.500c.6 1.200 1.600 2.200 2.800 2.800l.6-.6c.3-.3.700-.4 1.100-.2l1.500.8c.6.300.6 1 .2 1.500c-1 1.200-2.400 1.200-4 .5c-2.200-1-4-2.800-4.800-5c-.5-1.300-.1-2.400 1.200-3.200z" fill="#fff"/></svg>
<div style="left:1054.5px;top:1038.5px;width:15px;height:15px;background:#38a8f0;border-radius:8px;"></div>
<span style="left:1059.2px;top:1040.0px;height:12px;line-height:12px;font-size:10px;color:#fff;white-space:pre;">1</span>
<div style="left:1047.7px;top:1072px;width:6px;height:2.5px;background:#8a8fa8;border-radius:1.500px;"></div>
<div style="left:1083px;top:1044px;width:24px;height:24px;background:#5865f2;border-radius:12px;"></div>
<svg style="left:1083px;top:1044px;" width="24" height="24" viewBox="0 0 24 24"><path d="M6.500 8.500c1.500-1 3-1.300 5.500-1.300s4 .3 5.500 1.300c1.500 2.500 2 5 1.800 7.500c-1.500 1-2.500 1.300-3.500 1.500l-.8-1.300h-6l-.8 1.300c-1-.2-2-.5-3.500-1.500c-.2-2.500.3-5 1.800-7.500z" fill="#fff"/><circle cx="9.500" cy="12.800" r="1.500" fill="#5865f2"/><circle cx="14.500" cy="12.800" r="1.500" fill="#5865f2"/></svg>
<div style="left:1092.0px;top:1072px;width:6px;height:2.5px;background:#8a8fa8;border-radius:1.500px;"></div>
<svg style="left:1129px;top:1043px;" width="20" height="27" viewBox="0 0 20 27"><rect x="1" y="3" width="18" height="22" rx="1.500" fill="#5fc8e8"/><rect x="1" y="22" width="18" height="3" fill="#e8783c"/><path d="M4 8h12M4 11.500h12M4 15h12M4 18.500h12" stroke="#2890b8" stroke-width="1.600"/><path d="M4 1.500v3M7 1.500v3M10 1.500v3M13 1.500v3M16 1.500v3" stroke="#d0e8f0" stroke-width="1.200"/></svg>
<div style="left:1136.0px;top:1072px;width:6px;height:2.5px;background:#8a8fa8;border-radius:1.500px;"></div>
<svg style="left:1168px;top:1044px;" width="26" height="26" viewBox="0 0 26 26"><circle cx="13" cy="13" r="12" fill="#e8453c"/><path d="M13 13L2.600 7a12 12 0 0 0 4.400 16.400z" fill="#34a853"/><path d="M13 13l-6 10.400a12 12 0 0 0 16.400-4.400a12 12 0 0 0 1.600-6z" fill="#fbbc05"/><path d="M13 13h12a12 12 0 0 0-1.600-6z" fill="#e8453c"/><circle cx="13" cy="13" r="5.500" fill="#fff"/><circle cx="13" cy="13" r="4.300" fill="#4285f4"/></svg>
<div style="left:1179.7px;top:1072px;width:6px;height:2.5px;background:#8a8fa8;border-radius:1.500px;"></div>
<div style="left:1185px;top:1039px;width:15px;height:15px;background:#d8c0a0;border-radius:8px;border:1px solid #f0e8d8;box-sizing:border-box;"></div>
<div style="left:1188.5px;top:1041px;width:8px;height:6px;background:#4a3020;border-radius:4px 4px 2px 2px;"></div>
<div style="left:1189.5px;top:1046px;width:6px;height:5px;background:#6a4830;border-radius:0 0 3px 3px;"></div>
<div style="left:1215px;top:1044px;width:24px;height:24px;background:#12a4f4;border-radius:5px;"></div>
<svg style="left:1215px;top:1044px;" width="24" height="24" viewBox="0 0 24 24"><path d="M15 7.500a5.500 5.500 0 1 0 0 9" fill="none" stroke="#fff" stroke-width="2"/><path d="M11 12l5-4M11 12l5 4" stroke="#fff" stroke-width="1.800"/></svg>
<div style="left:1223.7px;top:1072px;width:6px;height:2.5px;background:#8a8fa8;border-radius:1.500px;"></div>
<div style="left:1259px;top:1044.5px;width:23px;height:23px;background:#1c1c24;border-radius:12px;border:1.500px solid #d0d0d8;box-sizing:border-box;"></div>
<svg style="left:1259px;top:1044.5px;" width="23" height="23" viewBox="0 0 23 23"><circle cx="11.500" cy="8" r="3.800" fill="none" stroke="#d8d8e0" stroke-width="1.500"/><circle cx="8" cy="14" r="3.800" fill="none" stroke="#d8d8e0" stroke-width="1.500"/><circle cx="15" cy="14" r="3.800" fill="none" stroke="#d8d8e0" stroke-width="1.500"/></svg>
<div style="left:1273px;top:1040px;width:11px;height:11px;background:#f0141c;border-radius:6px;"></div>
<div style="left:1267.7px;top:1072px;width:6px;height:2.5px;background:#8a8fa8;border-radius:1.500px;"></div>
<svg style="left:1302px;top:1044px;" width="26" height="25" viewBox="0 0 26 25"><path d="M18 1l7 3v17l-7 3l-11-10l-4 3.500l-2-1v-8l2-1l4 3.500z" fill="#a070e0"/><path d="M18 1l7 3v17l-7 3z" fill="#c090f8"/><path d="M18 7.500v10l-6-5z" fill="#161f5e"/><path d="M1 8.500l2-1 4 3.500-4 5-2-1z" fill="#8050c0"/></svg>
<div style="left:1312.0px;top:1072px;width:6px;height:2.5px;background:#8a8fa8;border-radius:1.500px;"></div>
<div style="left:1340px;top:1036.5px;width:38px;height:40px;background:#232c6e;border-radius:4px;border:1px solid #303a80;box-sizing:border-box;"></div>
<svg style="left:1347px;top:1043px;" width="26" height="28" viewBox="0 0 26 28"><path d="M3 2h18l3 2v20h-18l-3-2z" fill="#0c3c98"/><rect x="3" y="1" width="19" height="19" fill="#1868e0"/><path d="M3 20h19l2 4h-18z" fill="#0a2c78"/></svg>
<span style="left:1354.4px;top:1045.0px;height:15px;line-height:15px;font-size:14px;color:#fff;white-space:pre;font-weight:bold;">R</span>
<span style="left:1355.0px;top:1063.5px;height:6px;line-height:6px;font-size:5px;color:#c8d8f8;white-space:pre;font-weight:bold;">RVT</span>
<div style="left:1351.3px;top:1072px;width:16px;height:2.5px;background:#60a8f0;border-radius:1.500px;"></div>
<span style="left:1868.6px;top:1040.0px;height:16px;line-height:16px;font-size:12px;color:#fff;white-space:pre;letter-spacing:-0.33px;">18:38</span>
<span style="left:1835.8px;top:1056.0px;height:16px;line-height:16px;font-size:12px;color:#fff;white-space:pre;letter-spacing:0.11px;">19/05/2025</span>
</div></body></html>
